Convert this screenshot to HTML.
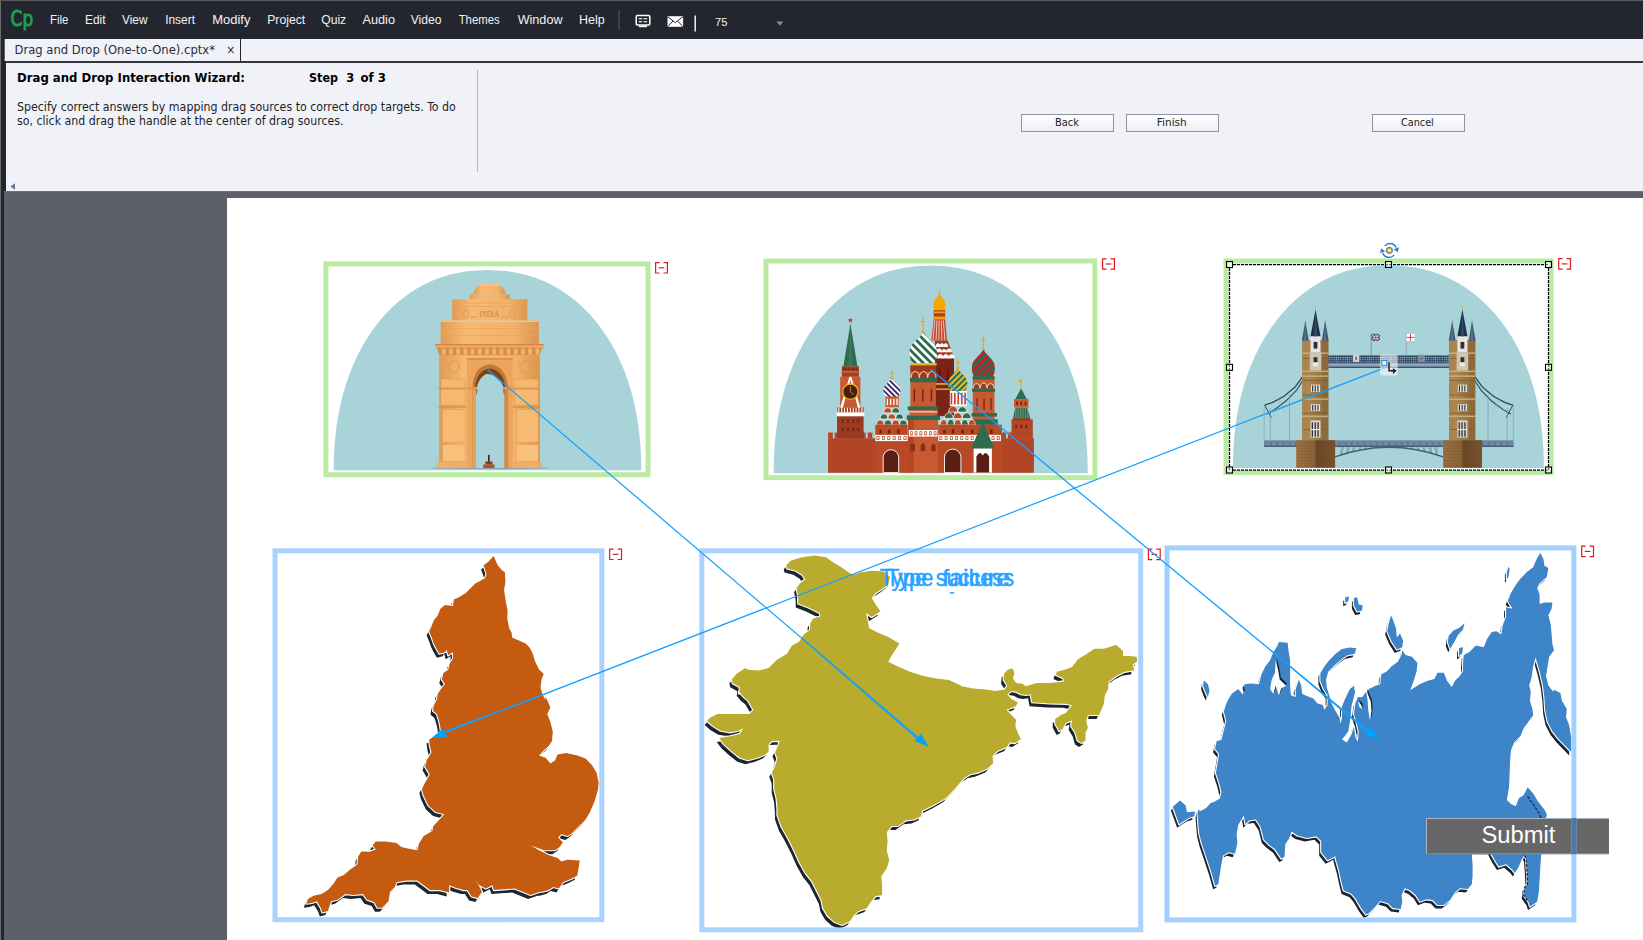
<!DOCTYPE html>
<html><head><meta charset="utf-8"><title>Drag and Drop (One-to-One).cptx</title>
<style>
html,body{margin:0;padding:0;}
body{width:1643px;height:940px;overflow:hidden;position:relative;background:#5d6069;font-family:"DejaVu Sans","Liberation Sans",sans-serif;}
.abs{position:absolute;}
#menubar{left:0;top:0;width:1643px;height:39px;background:#23262f;}
#leftedge{left:0;top:0;width:4px;height:940px;background:#23262f;border-left:1px solid #6b6b6b;box-sizing:border-box;}
#topedge{left:0;top:0;width:1643px;height:1px;background:#5a5a5a;}
#tabstrip{left:5px;top:39px;width:1638px;height:22px;background:#f0f2f8;}
#tab{left:5px;top:39px;width:235px;height:22px;border-right:1px solid #23262f;background:#f0f2f8;}
#tabline{left:4px;top:61px;width:1639px;height:2px;background:#33363e;}
#panel{left:6px;top:63px;width:1637px;height:128px;background:#f0f2f8;}
#paneledge{left:4px;top:61px;width:2px;height:130px;background:#23262f;}
#stagetop{left:4px;top:191px;width:1639px;height:1px;background:#6c6f77;}
#canvas{left:227px;top:198px;width:1416px;height:742px;background:#fff;}
#vsep{left:477px;top:70px;width:1px;height:102px;background:#b4b6c4;}
.btn{height:16px;width:91px;border:1px solid #8e90a3;background:linear-gradient(#ffffff,#eceef6);}
</style></head>
<body>
<div class="abs" id="menubar"></div>
<div class="abs" id="tabstrip"></div>
<div class="abs" id="tab"></div>
<div class="abs" id="tabline"></div>
<div class="abs" id="panel"></div>
<div class="abs" id="stagetop"></div>
<div class="abs" id="leftedge"></div>
<div class="abs" id="paneledge"></div>
<div class="abs" id="topedge"></div>
<div class="abs" id="vsep"></div>
<div class="abs btn" style="left:1021px;top:114px"></div>
<div class="abs btn" style="left:1126px;top:114px"></div>
<div class="abs btn" style="left:1372px;top:114px"></div>
<div class="abs" id="canvas"></div>
<!--STAGE-->
<svg class="abs" style="left:0;top:0" width="1643" height="940" viewBox="0 0 1643 940">
<path d="M333.8 470.3 L333.8 463.5 L334.0 457.4 L334.2 451.5 L334.6 445.8 L335.0 440.2 L335.6 434.7 L336.2 429.2 L336.9 423.9 L337.8 418.6 L338.7 413.4 L339.7 408.2 L340.8 403.2 L342.0 398.2 L343.3 393.2 L344.7 388.4 L346.2 383.6 L347.8 378.9 L349.4 374.3 L351.2 369.7 L353.0 365.2 L355.0 360.8 L357.0 356.5 L359.1 352.3 L361.3 348.2 L363.6 344.1 L365.9 340.2 L368.4 336.3 L370.9 332.5 L373.5 328.9 L376.2 325.3 L378.9 321.8 L381.7 318.4 L384.6 315.1 L387.6 312.0 L390.6 308.9 L393.7 305.9 L396.9 303.1 L400.2 300.3 L403.5 297.7 L406.8 295.2 L410.3 292.8 L413.8 290.5 L417.3 288.3 L420.9 286.3 L424.6 284.3 L428.3 282.5 L432.1 280.8 L435.9 279.2 L439.8 277.8 L443.8 276.5 L447.8 275.3 L451.8 274.2 L456.0 273.2 L460.1 272.4 L464.4 271.7 L468.7 271.1 L473.1 270.7 L477.6 270.4 L482.3 270.2 L487.5 270.1 L492.7 270.2 L497.4 270.4 L501.9 270.7 L506.3 271.1 L510.6 271.7 L514.9 272.4 L519.0 273.2 L523.2 274.2 L527.2 275.3 L531.2 276.5 L535.2 277.8 L539.1 279.2 L542.9 280.8 L546.7 282.5 L550.4 284.3 L554.1 286.3 L557.7 288.3 L561.2 290.5 L564.7 292.8 L568.2 295.2 L571.5 297.7 L574.8 300.3 L578.1 303.1 L581.3 305.9 L584.4 308.9 L587.4 312.0 L590.4 315.1 L593.3 318.4 L596.1 321.8 L598.8 325.3 L601.5 328.9 L604.1 332.5 L606.6 336.3 L609.1 340.2 L611.4 344.1 L613.7 348.2 L615.9 352.3 L618.0 356.5 L620.0 360.8 L622.0 365.2 L623.8 369.7 L625.6 374.3 L627.2 378.9 L628.8 383.6 L630.3 388.4 L631.7 393.2 L633.0 398.2 L634.2 403.2 L635.3 408.2 L636.3 413.4 L637.2 418.6 L638.1 423.9 L638.8 429.2 L639.4 434.7 L640.0 440.2 L640.4 445.8 L640.8 451.5 L641.0 457.4 L641.2 463.5 L641.2 470.3 Z" fill="#a7d3d9"/>
<path d="M773.7 473.2 L773.8 466.2 L773.9 459.9 L774.2 453.8 L774.5 447.8 L774.9 442.0 L775.5 436.3 L776.1 430.6 L776.9 425.1 L777.7 419.6 L778.7 414.2 L779.7 408.9 L780.9 403.6 L782.1 398.4 L783.4 393.3 L784.8 388.3 L786.4 383.3 L788.0 378.5 L789.7 373.7 L791.5 368.9 L793.4 364.3 L795.3 359.8 L797.4 355.3 L799.6 350.9 L801.8 346.6 L804.1 342.4 L806.5 338.3 L809.0 334.3 L811.6 330.4 L814.2 326.6 L817.0 322.9 L819.8 319.3 L822.7 315.8 L825.6 312.4 L828.7 309.1 L831.8 305.9 L834.9 302.8 L838.2 299.9 L841.5 297.0 L844.9 294.3 L848.3 291.7 L851.8 289.2 L855.4 286.8 L859.0 284.6 L862.7 282.4 L866.5 280.4 L870.3 278.6 L874.1 276.8 L878.0 275.2 L882.0 273.7 L886.0 272.3 L890.1 271.0 L894.3 269.9 L898.5 268.9 L902.7 268.1 L907.1 267.4 L911.5 266.8 L916.0 266.3 L920.6 266.0 L925.4 265.8 L930.7 265.7 L936.0 265.8 L940.8 266.0 L945.4 266.3 L949.9 266.8 L954.3 267.4 L958.7 268.1 L962.9 268.9 L967.1 269.9 L971.3 271.0 L975.4 272.3 L979.4 273.7 L983.4 275.2 L987.3 276.8 L991.1 278.6 L994.9 280.4 L998.7 282.4 L1002.4 284.6 L1006.0 286.8 L1009.6 289.2 L1013.1 291.7 L1016.5 294.3 L1019.9 297.0 L1023.2 299.9 L1026.5 302.8 L1029.6 305.9 L1032.7 309.1 L1035.8 312.4 L1038.7 315.8 L1041.6 319.3 L1044.4 322.9 L1047.2 326.6 L1049.8 330.4 L1052.4 334.3 L1054.9 338.3 L1057.3 342.4 L1059.6 346.6 L1061.8 350.9 L1064.0 355.3 L1066.1 359.8 L1068.0 364.3 L1069.9 368.9 L1071.7 373.7 L1073.4 378.5 L1075.0 383.3 L1076.6 388.3 L1078.0 393.3 L1079.3 398.4 L1080.5 403.6 L1081.7 408.9 L1082.7 414.2 L1083.7 419.6 L1084.5 425.1 L1085.3 430.6 L1085.9 436.3 L1086.5 442.0 L1086.9 447.8 L1087.2 453.8 L1087.5 459.9 L1087.6 466.2 L1087.7 473.2 Z" fill="#a7d3d9"/>
<path d="M1233.0 468.0 L1233.0 461.2 L1233.2 455.0 L1233.4 449.0 L1233.8 443.2 L1234.2 437.5 L1234.8 431.9 L1235.4 426.4 L1236.2 421.0 L1237.0 415.7 L1237.9 410.4 L1239.0 405.2 L1240.1 400.0 L1241.3 395.0 L1242.6 390.0 L1244.0 385.1 L1245.5 380.3 L1247.1 375.5 L1248.8 370.8 L1250.6 366.2 L1252.5 361.7 L1254.4 357.2 L1256.5 352.9 L1258.6 348.6 L1260.8 344.4 L1263.1 340.3 L1265.5 336.3 L1268.0 332.4 L1270.5 328.6 L1273.1 324.9 L1275.8 321.2 L1278.6 317.7 L1281.5 314.3 L1284.4 311.0 L1287.4 307.8 L1290.5 304.6 L1293.6 301.7 L1296.8 298.8 L1300.1 296.0 L1303.4 293.3 L1306.9 290.8 L1310.3 288.3 L1313.9 286.0 L1317.4 283.8 L1321.1 281.7 L1324.8 279.8 L1328.6 277.9 L1332.4 276.2 L1336.3 274.6 L1340.2 273.2 L1344.2 271.8 L1348.2 270.6 L1352.3 269.5 L1356.5 268.6 L1360.7 267.7 L1365.0 267.0 L1369.4 266.4 L1373.8 266.0 L1378.4 265.7 L1383.2 265.5 L1388.4 265.4 L1393.6 265.5 L1398.4 265.7 L1403.0 266.0 L1407.4 266.4 L1411.8 267.0 L1416.1 267.7 L1420.3 268.6 L1424.5 269.5 L1428.6 270.6 L1432.6 271.8 L1436.6 273.2 L1440.5 274.6 L1444.4 276.2 L1448.2 277.9 L1452.0 279.8 L1455.7 281.7 L1459.4 283.8 L1462.9 286.0 L1466.5 288.3 L1469.9 290.8 L1473.4 293.3 L1476.7 296.0 L1480.0 298.8 L1483.2 301.7 L1486.3 304.6 L1489.4 307.8 L1492.4 311.0 L1495.3 314.3 L1498.2 317.7 L1501.0 321.2 L1503.7 324.9 L1506.3 328.6 L1508.8 332.4 L1511.3 336.3 L1513.7 340.3 L1516.0 344.4 L1518.2 348.6 L1520.3 352.9 L1522.4 357.2 L1524.3 361.7 L1526.2 366.2 L1528.0 370.8 L1529.7 375.5 L1531.3 380.3 L1532.8 385.1 L1534.2 390.0 L1535.5 395.0 L1536.7 400.0 L1537.8 405.2 L1538.9 410.4 L1539.8 415.7 L1540.6 421.0 L1541.4 426.4 L1542.0 431.9 L1542.6 437.5 L1543.0 443.2 L1543.4 449.0 L1543.6 455.0 L1543.8 461.2 L1543.8 468.0 Z" fill="#a7d3d9"/>
<g>
<defs><linearGradient id="gg" x1="0" x2="1" y1="0" y2="0"><stop offset="0" stop-color="#e39a52"/><stop offset="0.25" stop-color="#f6b973"/><stop offset="0.75" stop-color="#f3b26b"/><stop offset="1" stop-color="#dd944c"/></linearGradient><linearGradient id="gg2" x1="0" x2="0" y1="0" y2="1"><stop offset="0" stop-color="#f8c07c"/><stop offset="1" stop-color="#e9a259"/></linearGradient></defs>
<ellipse cx="489.8" cy="468.0" rx="58.9" ry="1.2" fill="#6f9096" opacity="0.6"/>
<path d="M473.4 294.4 Q474.5 283.1 489.8 283.1 Q504.6 283.1 505.5 294.4 Z" fill="url(#gg)"/>
<rect x="478.9" y="283.5" width="21.4" height="2.2" fill="#f8c483" />
<rect x="469.7" y="294.4" width="40.1" height="5.0" fill="url(#gg)" />
<rect x="452.3" y="299.4" width="75.0" height="21.2" fill="url(#gg)" />
<rect x="452.3" y="302.7" width="75.0" height="0.7" fill="#e6a25c" />
<rect x="452.3" y="306.0" width="75.0" height="0.7" fill="#e6a25c" />
<rect x="440.7" y="320.6" width="98.1" height="23.5" fill="url(#gg)" />
<rect x="440.7" y="320.6" width="98.1" height="1.3" fill="#f9c88a" />
<rect x="440.7" y="328.4" width="98.1" height="0.7" fill="#e6a25c" />
<rect x="440.7" y="335.4" width="98.1" height="0.7" fill="#e6a25c" />
<rect x="435.3" y="344.1" width="108.6" height="3.5" fill="#eea862" />
<rect x="435.3" y="344.1" width="108.6" height="1.1" fill="#c9843f" />
<path d="M436.6 347.6 H542.5 L539.5 355.5 H439.6 Z" fill="#d48d47"/>
<rect x="441.8" y="348.5" width="3.9" height="6.1" fill="#f2b26b" />
<rect x="449.0" y="348.5" width="3.9" height="6.1" fill="#f2b26b" />
<rect x="456.2" y="348.5" width="3.9" height="6.1" fill="#f2b26b" />
<rect x="463.4" y="348.5" width="3.9" height="6.1" fill="#f2b26b" />
<rect x="470.6" y="348.5" width="3.9" height="6.1" fill="#f2b26b" />
<rect x="477.8" y="348.5" width="3.9" height="6.1" fill="#f2b26b" />
<rect x="485.0" y="348.5" width="3.9" height="6.1" fill="#f2b26b" />
<rect x="492.2" y="348.5" width="3.9" height="6.1" fill="#f2b26b" />
<rect x="499.4" y="348.5" width="3.9" height="6.1" fill="#f2b26b" />
<rect x="506.6" y="348.5" width="3.9" height="6.1" fill="#f2b26b" />
<rect x="513.8" y="348.5" width="3.9" height="6.1" fill="#f2b26b" />
<rect x="521.0" y="348.5" width="3.9" height="6.1" fill="#f2b26b" />
<rect x="528.2" y="348.5" width="3.9" height="6.1" fill="#f2b26b" />
<rect x="535.4" y="348.5" width="3.9" height="6.1" fill="#f2b26b" />
<rect x="439.2" y="355.5" width="100.7" height="112.5" fill="url(#gg)" />
<rect x="440.9" y="379.0" width="24.2" height="26.2" fill="#f5b870" stroke="#d99550" stroke-width="0.6"/>
<rect x="442.7" y="409.6" width="22.5" height="32.7" fill="#f6ba73" stroke="#dd9a55" stroke-width="0.5"/>
<rect x="442.7" y="444.4" width="22.5" height="17.4" fill="#f8c07d" stroke="#dd9a55" stroke-width="0.5"/>
<rect x="438.5" y="387.7" width="28.3" height="1.7" fill="#d8924c" />
<rect x="438.5" y="406.3" width="28.3" height="1.5" fill="#d8924c" />
<circle cx="453.7" cy="367.0" r="5.7" fill="none" stroke="#d79450" stroke-width="0.8"/>
<rect x="514.4" y="379.0" width="23.8" height="26.2" fill="#f5b870" stroke="#d99550" stroke-width="0.6"/>
<rect x="516.2" y="409.6" width="22.0" height="32.7" fill="#f6ba73" stroke="#dd9a55" stroke-width="0.5"/>
<rect x="516.2" y="444.4" width="22.0" height="17.4" fill="#f8c07d" stroke="#dd9a55" stroke-width="0.5"/>
<rect x="512.0" y="387.7" width="27.9" height="1.7" fill="#d8924c" />
<rect x="512.0" y="406.3" width="27.9" height="1.5" fill="#d8924c" />
<circle cx="525.6" cy="367.0" r="5.7" fill="none" stroke="#d79450" stroke-width="0.8"/>
<rect x="437.4" y="461.9" width="31.6" height="6.1" fill="#f0ad66" />
<rect x="510.5" y="461.9" width="31.2" height="6.1" fill="#f0ad66" />
<rect x="466.9" y="358.3" width="45.8" height="109.7" fill="#eda45c" />
<rect x="466.9" y="358.3" width="45.8" height="1.5" fill="#d48d47" />
<path d="M472.3 468.0 V388.8 Q473.4 365.9 489.8 364.2 Q506.8 365.9 508.1 388.8 V468.0 Z" fill="#c07a38"/>
<path d="M474.9 388.8 Q476.3 370.7 489.8 368.6 Q504.0 370.7 505.5 388.8 Z" fill="#7c4318"/>
<path d="M476.0 468.0 V392.1 Q477.1 379.0 485.4 374.2 Q495.2 372.5 502.9 385.6 L504.6 395.4 V468.0 Z" fill="#a7d3d9"/>
<rect x="467.5" y="386.9" width="9.6" height="2.6" fill="#e09a55" />
<rect x="502.9" y="386.9" width="9.6" height="2.6" fill="#e09a55" />
<path d="M474.5 389.5 h3.1 l-0.9 4.8 h-2.2 Z" fill="#a8672c"/>
<path d="M502.9 389.5 h3.1 v4.8 h-2.2 Z" fill="#a8672c"/>
<rect x="472.3" y="389.5" width="3.7" height="78.5" fill="#e8a058" />
<rect x="504.6" y="389.5" width="3.5" height="78.5" fill="#d18a45" />
<rect x="488.0" y="454.9" width="1.7" height="7.0" fill="#3a2a22" />
<rect x="485.4" y="461.5" width="7.0" height="3.1" fill="#8b3a1c" />
<rect x="483.2" y="464.5" width="11.3" height="3.5" fill="#b5502a" />
<text x="489.3" y="316.9" text-anchor="middle" font-family="'Liberation Serif',serif" font-size="7.2" fill="#c07f3d" textLength="20" lengthAdjust="spacingAndGlyphs">INDIA</text>
<path d="M470.6 316.9 H477.1 M501.1 316.9 H508.3" stroke="#c98a48" stroke-width="0.7" fill="none"/>
<ellipse cx="466.2" cy="313.6" rx="2.6" ry="4" fill="none" stroke="#d29351" stroke-width="0.7"/><ellipse cx="512.0" cy="313.6" rx="2.6" ry="4" fill="none" stroke="#d29351" stroke-width="0.7"/>
</g>
<g>
<defs><pattern id="pgw" width="5.6" height="5.6" patternUnits="userSpaceOnUse" patternTransform="rotate(-45)"><rect width="5.6" height="5.6" fill="#2f6b4f"/><rect width="2.8" height="5.6" fill="#fff"/></pattern><pattern id="ppw" width="3.8" height="3.8" patternUnits="userSpaceOnUse" patternTransform="rotate(-45)"><rect width="3.8" height="3.8" fill="#3a2a6e"/><rect width="1.9" height="3.8" fill="#fff"/></pattern><pattern id="pyg" width="4.2" height="4.2" patternUnits="userSpaceOnUse" patternTransform="rotate(45)"><rect width="4.2" height="4.2" fill="#e3c22a"/><rect width="2.1" height="4.2" fill="#2f6b4f"/></pattern><pattern id="prg" width="5.2" height="5.2" patternUnits="userSpaceOnUse" patternTransform="rotate(45)"><rect width="5.2" height="5.2" fill="#c2212b"/><rect width="2.6" height="5.2" fill="#2f6b4f"/></pattern><pattern id="prw" width="1.6" height="1.6" patternUnits="userSpaceOnUse" patternTransform="rotate(0)"><rect width="1.6" height="1.6" fill="#c2452a"/><rect width="0.8" height="1.6" fill="#fff"/></pattern><pattern id="pgt" width="2.4" height="2.4" patternUnits="userSpaceOnUse" patternTransform="rotate(0)"><rect width="2.4" height="2.4" fill="#2f6b4f"/><rect width="1.2" height="2.4" fill="#5d8f74"/></pattern></defs>
<rect x="828.1" y="438.5" width="205.7" height="34.0" fill="#bb4b27" />
<rect x="828.1" y="438.5" width="47.2" height="34.0" fill="#b24526" />
<rect x="1001.9" y="438.5" width="31.9" height="34.0" fill="#b24526" />
<polygon points="828.1,438.5 828.1,431.5 829.4,433.6 830.6,431.5 831.9,433.6 832.8,431.5 832.8,438.5" fill="#b24526" />
<polygon points="834.7,438.5 834.7,431.5 836.0,433.6 837.2,431.5 838.5,433.6 839.4,431.5 839.4,438.5" fill="#b24526" />
<polygon points="841.3,438.5 841.3,431.5 842.6,433.6 843.8,431.5 845.1,433.6 846.0,431.5 846.0,438.5" fill="#b24526" />
<polygon points="847.9,438.5 847.9,431.5 849.1,433.6 850.4,431.5 851.7,433.6 852.6,431.5 852.6,438.5" fill="#b24526" />
<polygon points="854.5,438.5 854.5,431.5 855.7,433.6 857.0,431.5 858.3,433.6 859.1,431.5 859.1,438.5" fill="#b24526" />
<polygon points="861.1,438.5 861.1,431.5 862.3,433.6 863.6,431.5 864.9,433.6 865.7,431.5 865.7,438.5" fill="#b24526" />
<polygon points="867.7,438.5 867.7,431.5 868.9,433.6 870.2,431.5 871.5,433.6 872.3,431.5 872.3,438.5" fill="#b24526" />
<polygon points="1001.3,438.5 1001.3,431.5 1002.6,433.6 1003.8,431.5 1005.1,433.6 1006.0,431.5 1006.0,438.5" fill="#b24526" />
<polygon points="1007.9,438.5 1007.9,431.5 1009.1,433.6 1010.4,431.5 1011.7,433.6 1012.6,431.5 1012.6,438.5" fill="#b24526" />
<polygon points="1014.5,438.5 1014.5,431.5 1015.7,433.6 1017.0,431.5 1018.3,433.6 1019.1,431.5 1019.1,438.5" fill="#b24526" />
<polygon points="1021.1,438.5 1021.1,431.5 1022.3,433.6 1023.6,431.5 1024.9,433.6 1025.7,431.5 1025.7,438.5" fill="#b24526" />
<polygon points="1027.7,438.5 1027.7,431.5 1028.9,433.6 1030.2,431.5 1031.5,433.6 1032.3,431.5 1032.3,438.5" fill="#b24526" />
<rect x="877.9" y="457.3" width="1.9" height="0.9" fill="#a53e20" />
<rect x="904.7" y="459.0" width="1.9" height="0.9" fill="#a53e20" />
<rect x="956.7" y="443.6" width="1.9" height="0.9" fill="#a53e20" />
<rect x="832.3" y="465.8" width="1.9" height="0.9" fill="#a53e20" />
<rect x="882.3" y="448.4" width="1.9" height="0.9" fill="#a53e20" />
<rect x="1031.9" y="455.2" width="1.9" height="0.9" fill="#a53e20" />
<rect x="999.5" y="455.4" width="1.9" height="0.9" fill="#a53e20" />
<rect x="959.4" y="446.0" width="1.9" height="0.9" fill="#a53e20" />
<rect x="958.6" y="466.6" width="1.9" height="0.9" fill="#a53e20" />
<rect x="935.9" y="463.0" width="1.9" height="0.9" fill="#a53e20" />
<rect x="966.0" y="443.5" width="1.9" height="0.9" fill="#a53e20" />
<rect x="983.6" y="458.7" width="1.9" height="0.9" fill="#a53e20" />
<rect x="890.8" y="442.6" width="1.9" height="0.9" fill="#a53e20" />
<rect x="1005.4" y="455.3" width="1.9" height="0.9" fill="#a53e20" />
<rect x="975.6" y="466.9" width="1.9" height="0.9" fill="#a53e20" />
<rect x="974.7" y="468.2" width="1.9" height="0.9" fill="#a53e20" />
<rect x="909.8" y="464.7" width="1.9" height="0.9" fill="#a53e20" />
<rect x="919.9" y="468.6" width="1.9" height="0.9" fill="#a53e20" />
<rect x="1008.2" y="444.5" width="1.9" height="0.9" fill="#a53e20" />
<rect x="857.2" y="447.9" width="1.9" height="0.9" fill="#a53e20" />
<rect x="1025.8" y="454.2" width="1.9" height="0.9" fill="#a53e20" />
<rect x="956.9" y="450.3" width="1.9" height="0.9" fill="#a53e20" />
<rect x="932.6" y="452.8" width="1.9" height="0.9" fill="#a53e20" />
<rect x="900.9" y="458.5" width="1.9" height="0.9" fill="#a53e20" />
<rect x="948.3" y="467.7" width="1.9" height="0.9" fill="#a53e20" />
<rect x="968.1" y="468.4" width="1.9" height="0.9" fill="#a53e20" />
<rect x="1003.6" y="470.2" width="1.9" height="0.9" fill="#a53e20" />
<rect x="966.0" y="446.4" width="1.9" height="0.9" fill="#a53e20" />
<rect x="1004.4" y="469.4" width="1.9" height="0.9" fill="#a53e20" />
<rect x="1013.4" y="458.0" width="1.9" height="0.9" fill="#a53e20" />
<rect x="974.6" y="447.8" width="1.9" height="0.9" fill="#a53e20" />
<rect x="998.6" y="458.2" width="1.9" height="0.9" fill="#a53e20" />
<rect x="887.5" y="443.5" width="1.9" height="0.9" fill="#a53e20" />
<rect x="1003.1" y="470.1" width="1.9" height="0.9" fill="#a53e20" />
<rect x="847.6" y="464.7" width="1.9" height="0.9" fill="#a53e20" />
<rect x="913.0" y="446.0" width="1.9" height="0.9" fill="#a53e20" />
<rect x="889.3" y="463.8" width="1.9" height="0.9" fill="#a53e20" />
<rect x="1006.9" y="443.0" width="1.9" height="0.9" fill="#a53e20" />
<rect x="954.4" y="443.0" width="1.9" height="0.9" fill="#a53e20" />
<rect x="975.6" y="451.2" width="1.9" height="0.9" fill="#a53e20" />
<rect x="1008.6" y="469.9" width="1.9" height="0.9" fill="#a53e20" />
<rect x="932.3" y="470.4" width="1.9" height="0.9" fill="#a53e20" />
<rect x="892.5" y="443.9" width="1.9" height="0.9" fill="#a53e20" />
<rect x="951.4" y="442.6" width="1.9" height="0.9" fill="#a53e20" />
<rect x="869.7" y="453.4" width="1.9" height="0.9" fill="#a53e20" />
<rect x="953.6" y="446.2" width="1.9" height="0.9" fill="#a53e20" />
<rect x="838.2" y="466.6" width="1.9" height="0.9" fill="#a53e20" />
<rect x="893.3" y="469.2" width="1.9" height="0.9" fill="#a53e20" />
<rect x="1011.8" y="452.6" width="1.9" height="0.9" fill="#a53e20" />
<rect x="923.1" y="456.6" width="1.9" height="0.9" fill="#a53e20" />
<rect x="960.4" y="458.8" width="1.9" height="0.9" fill="#a53e20" />
<rect x="943.2" y="459.5" width="1.9" height="0.9" fill="#a53e20" />
<rect x="1020.7" y="456.3" width="1.9" height="0.9" fill="#a53e20" />
<rect x="917.2" y="462.4" width="1.9" height="0.9" fill="#a53e20" />
<rect x="877.9" y="450.4" width="1.9" height="0.9" fill="#a53e20" />
<rect x="1028.3" y="456.7" width="1.9" height="0.9" fill="#a53e20" />
<rect x="941.0" y="442.0" width="1.9" height="0.9" fill="#a53e20" />
<rect x="913.9" y="458.4" width="1.9" height="0.9" fill="#a53e20" />
<rect x="833.6" y="459.4" width="1.9" height="0.9" fill="#a53e20" />
<rect x="958.0" y="443.4" width="1.9" height="0.9" fill="#a53e20" />
<rect x="837.0" y="416.2" width="26.6" height="22.3" fill="#9b3a1f" />
<rect x="842.1" y="419.4" width="1.7" height="3.2" fill="#6b2413" />
<rect x="842.1" y="427.9" width="1.7" height="3.2" fill="#6b2413" />
<rect x="847.2" y="419.4" width="1.7" height="3.2" fill="#6b2413" />
<rect x="847.2" y="427.9" width="1.7" height="3.2" fill="#6b2413" />
<rect x="852.3" y="419.4" width="1.7" height="3.2" fill="#6b2413" />
<rect x="852.3" y="427.9" width="1.7" height="3.2" fill="#6b2413" />
<rect x="857.4" y="419.4" width="1.7" height="3.2" fill="#6b2413" />
<rect x="857.4" y="427.9" width="1.7" height="3.2" fill="#6b2413" />
<rect x="836.6" y="411.9" width="27.7" height="4.3" fill="#fff" />
<rect x="837.4" y="407.2" width="26.2" height="5.1" fill="#a53e20" />
<rect x="838.3" y="407.2" width="1.1" height="5.1" fill="#fff" />
<rect x="841.2" y="407.2" width="1.1" height="5.1" fill="#fff" />
<rect x="844.0" y="407.2" width="1.1" height="5.1" fill="#fff" />
<rect x="846.9" y="407.2" width="1.1" height="5.1" fill="#fff" />
<rect x="849.8" y="407.2" width="1.1" height="5.1" fill="#fff" />
<rect x="852.7" y="407.2" width="1.1" height="5.1" fill="#fff" />
<rect x="855.5" y="407.2" width="1.1" height="5.1" fill="#fff" />
<rect x="858.4" y="407.2" width="1.1" height="5.1" fill="#fff" />
<rect x="861.3" y="407.2" width="1.1" height="5.1" fill="#fff" />
<rect x="840.2" y="376.8" width="20.2" height="30.9" fill="#c75a30" />
<polygon points="840.2,407.7 850.4,373.6 860.4,407.7 857.9,407.7 850.4,380.0 842.8,407.7" fill="#fff" />
<rect x="841.9" y="366.2" width="17.0" height="10.6" fill="#a8401f" />
<rect x="843.0" y="367.7" width="1.3" height="2.8" fill="#6b2413" />
<rect x="845.6" y="367.7" width="1.3" height="2.8" fill="#6b2413" />
<rect x="848.3" y="367.7" width="1.3" height="2.8" fill="#6b2413" />
<rect x="851.0" y="367.7" width="1.3" height="2.8" fill="#6b2413" />
<rect x="853.6" y="367.7" width="1.3" height="2.8" fill="#6b2413" />
<rect x="856.3" y="367.7" width="1.3" height="2.8" fill="#6b2413" />
<rect x="841.3" y="371.1" width="18.3" height="1.3" fill="#d9643a" />
<polygon points="850.4,323.6 857.4,366.2 843.4,366.2" fill="#2f6b4f" />
<polygon points="850.4,323.6 851.9,366.2 848.9,366.2" fill="#3c7c5e" />
<polygon points="850.4,317.7 851.1,319.5 853.1,319.6 851.5,320.8 852.1,322.7 850.4,321.6 848.8,322.7 849.3,320.8 847.8,319.6 849.7,319.5" fill="#cf1f2b" />
<circle cx="850.4" cy="391.7" r="7.7" fill="#4a1d10" stroke="#f2b01e" stroke-width="1.3"/>
<path d="M850.4 391.7 V386.4 M850.4 391.7 L853.6 394.9" stroke="#f2b01e" stroke-width="0.7"/>
<rect x="1011.5" y="419.4" width="21.3" height="19.1" fill="#b24526" />
<rect x="1014.0" y="399.1" width="14.5" height="8.5" fill="#c75a30" />
<polygon points="1021.1,388.5 1026.8,399.1 1015.3,399.1" fill="#2f6b4f" />
<polygon points="1015.3,407.7 1027.4,407.7 1030.6,419.4 1012.6,419.4" fill="url(#pgt)" />
<rect x="1013.2" y="418.3" width="17.0" height="2.1" fill="#9b3a1f" />
<path d="M1021.1 388.5 V378.9" stroke="#e9a31c" stroke-width="0.8"/>
<polygon points="1021.1,378.9 1017.9,380.4 1021.1,383.2" fill="#e9a31c" />
<rect x="1016.2" y="401.7" width="1.7" height="3.4" fill="#6b2413" />
<rect x="1015.3" y="424.7" width="1.7" height="3.4" fill="#6b2413" />
<rect x="1020.4" y="401.7" width="1.7" height="3.4" fill="#6b2413" />
<rect x="1020.4" y="424.7" width="1.7" height="3.4" fill="#6b2413" />
<rect x="1024.7" y="401.7" width="1.7" height="3.4" fill="#6b2413" />
<rect x="1025.5" y="424.7" width="1.7" height="3.4" fill="#6b2413" />
<rect x="934.9" y="358.7" width="19.1" height="57.4" fill="#7a2418" />
<rect x="936.0" y="383.2" width="17.7" height="1.5" fill="#e3c22a" />
<rect x="936.0" y="388.5" width="17.7" height="1.3" fill="#e3c22a" />
<path d="M939.6 380.0 V369.4 M947.7 380.0 V369.4" stroke="#4a130c" stroke-width="1.2"/>
<polygon points="934.9,340.6 947.7,340.6 954.5,358.7 934.9,358.7" fill="#a33b22" />
<path d="M936.0 347.0 A1.95 3.40 0 0 1 939.9 347.0" fill="#fff" stroke="#fff" stroke-width="0.8"/><path d="M939.9 347.0 A1.95 3.40 0 0 1 943.8 347.0" fill="#fff" stroke="#fff" stroke-width="0.8"/><path d="M943.8 347.0 A1.95 3.40 0 0 1 947.7 347.0" fill="#fff" stroke="#fff" stroke-width="0.8"/>
<path d="M936.6 352.3 A2.48 3.40 0 0 1 941.6 352.3" fill="#fff" stroke="#fff" stroke-width="0.8"/><path d="M941.6 352.3 A2.48 3.40 0 0 1 946.5 352.3" fill="#fff" stroke="#fff" stroke-width="0.8"/><path d="M946.5 352.3 A2.48 3.40 0 0 1 951.5 352.3" fill="#fff" stroke="#fff" stroke-width="0.8"/>
<path d="M937.4 358.3 A2.84 3.83 0 0 1 943.1 358.3" fill="#fff" stroke="#fff" stroke-width="0.8"/><path d="M943.1 358.3 A2.84 3.83 0 0 1 948.8 358.3" fill="#fff" stroke="#fff" stroke-width="0.8"/><path d="M948.8 358.3 A2.84 3.83 0 0 1 954.5 358.3" fill="#fff" stroke="#fff" stroke-width="0.8"/>
<polygon points="933.8,319.4 945.1,319.4 947.0,340.6 931.3,340.6" fill="#c2452a" />
<path d="M934.9 320.4 L933.0 340.2" stroke="#fff" stroke-width="0.7"/>
<path d="M937.0 320.4 L936.0 340.2" stroke="#fff" stroke-width="0.7"/>
<path d="M939.1 320.4 L938.9 340.2" stroke="#fff" stroke-width="0.7"/>
<path d="M941.3 320.4 L941.9 340.2" stroke="#fff" stroke-width="0.7"/>
<path d="M943.4 320.4 L944.9 340.2" stroke="#fff" stroke-width="0.7"/>
<rect x="933.8" y="309.8" width="11.3" height="9.6" fill="#b53c22" />
<rect x="933.4" y="311.5" width="12.1" height="1.7" fill="#e9a31c" />
<rect x="933.4" y="316.6" width="12.1" height="2.6" fill="#e9a31c" />
<path d="M939.4 293.2 C940.3 297.4 945.6 299.1 945.3 304.8 C945.3 308.2 944.1 310.2 943.7 310.2 H935.1 C934.6 310.2 933.4 308.2 933.4 304.8 C933.1 299.1 938.5 297.4 939.4 293.2Z" fill="#f5a800"/>
<path d="M939.4 290.2 V296.6 M938.3 292.3 H940.4" stroke="#e9a31c" stroke-width="0.8"/>
<rect x="972.8" y="376.8" width="21.7" height="47.9" fill="#c75a30" />
<path d="M983.4 348.5 C985.1 355.7 995.5 358.6 994.9 368.2 C994.9 374.0 992.6 377.4 991.7 377.4 H975.1 C974.2 377.4 971.9 374.0 971.9 368.2 C971.3 358.6 981.7 355.7 983.4 348.5Z" fill="url(#prg)"/>
<path d="M983.4 336.4 V350.2 M981.1 340.5 H985.7" stroke="#e9a31c" stroke-width="1" fill="none"/><circle cx="983.4" cy="348.9" r="1.4" fill="#e9a31c"/>
<rect x="972.8" y="376.2" width="21.7" height="3.4" fill="#2f6b4f" />
<path d="M973.2 388.5 A3.48 5.53 0 0 1 980.1 388.5" fill="#9b3a1f" stroke="#fff" stroke-width="0.8"/><path d="M980.1 388.5 A3.48 5.53 0 0 1 987.1 388.5" fill="#9b3a1f" stroke="#fff" stroke-width="0.8"/><path d="M987.1 388.5 A3.48 5.53 0 0 1 994.0 388.5" fill="#9b3a1f" stroke="#fff" stroke-width="0.8"/>
<rect x="972.1" y="388.5" width="22.8" height="3.4" fill="#2f6b4f" />
<rect x="976.4" y="398.1" width="1.3" height="11.7" fill="#7a2418" />
<rect x="983.4" y="398.1" width="1.3" height="11.7" fill="#7a2418" />
<rect x="990.4" y="398.1" width="1.3" height="11.7" fill="#7a2418" />
<rect x="971.5" y="413.0" width="25.5" height="3.6" fill="#2f6b4f" />
<rect x="974.3" y="419.4" width="23.4" height="5.3" fill="#2f6b4f" />
<rect x="949.8" y="390.6" width="17.0" height="15.3" fill="#fff" />
<rect x="950.6" y="392.8" width="1.7" height="11.7" fill="#c2452a" />
<rect x="954.0" y="392.8" width="1.7" height="11.7" fill="#c2452a" />
<rect x="957.4" y="392.8" width="1.7" height="11.7" fill="#c2452a" />
<rect x="960.9" y="392.8" width="1.7" height="11.7" fill="#c2452a" />
<rect x="964.3" y="392.8" width="1.7" height="11.7" fill="#c2452a" />
<path d="M957.9 367.7 C959.3 373.5 967.9 375.9 967.4 383.6 C967.4 388.3 965.5 391.1 964.8 391.1 H951.0 C950.2 391.1 948.3 388.3 948.3 383.6 C947.8 375.9 956.4 373.5 957.9 367.7Z" fill="url(#pyg)"/>
<path d="M957.9 359.1 V369.8 M955.5 362.3 H960.2" stroke="#e9a31c" stroke-width="1" fill="none"/><circle cx="957.9" cy="368.5" r="1.4" fill="#e9a31c"/>
<path d="M940.2 425.1 A3.51 5.87 0 0 1 947.2 425.1Z" fill="#b84a26" stroke="#fff" stroke-width="0.7"/><path d="M947.2 425.1 A3.51 5.87 0 0 1 954.3 425.1Z" fill="#2f6b4f" stroke="#fff" stroke-width="0.7"/><path d="M954.3 425.1 A3.51 5.87 0 0 1 961.3 425.1Z" fill="#b84a26" stroke="#fff" stroke-width="0.7"/><path d="M961.3 425.1 A3.51 5.87 0 0 1 968.3 425.1Z" fill="#2f6b4f" stroke="#fff" stroke-width="0.7"/><path d="M968.3 425.1 A3.51 5.87 0 0 1 975.3 425.1Z" fill="#b84a26" stroke="#fff" stroke-width="0.7"/><path d="M944.4 418.6 A4.45 5.87 0 0 1 953.3 418.6Z" fill="#2f6b4f" stroke="#fff" stroke-width="0.7"/><path d="M953.3 418.6 A4.45 5.87 0 0 1 962.2 418.6Z" fill="#b84a26" stroke="#fff" stroke-width="0.7"/><path d="M962.2 418.6 A4.45 5.87 0 0 1 971.1 418.6Z" fill="#2f6b4f" stroke="#fff" stroke-width="0.7"/><path d="M948.6 412.1 A4.56 5.87 0 0 1 957.8 412.1Z" fill="#b84a26" stroke="#fff" stroke-width="0.7"/><path d="M957.8 412.1 A4.56 5.87 0 0 1 966.9 412.1Z" fill="#2f6b4f" stroke="#fff" stroke-width="0.7"/>
<rect x="910.4" y="365.1" width="25.5" height="42.6" fill="#c75a30" />
<path d="M923.4 331.1 C925.5 339.1 937.9 342.4 937.2 353.1 C937.2 359.5 934.5 363.4 933.4 363.4 H913.4 C912.3 363.4 909.6 359.5 909.6 353.1 C908.9 342.4 921.3 339.1 923.4 331.1Z" fill="url(#pgw)"/>
<path d="M923.0 316.6 V333.2 M920.6 321.6 H925.3" stroke="#e9a31c" stroke-width="1" fill="none"/><circle cx="923.0" cy="331.9" r="1.4" fill="#e9a31c"/>
<rect x="910.6" y="363.0" width="26.0" height="2.6" fill="#e3b82a" />
<rect x="910.4" y="365.5" width="25.5" height="6.4" fill="#9b3a1f" />
<path d="M911.1 377.9 A4.15 6.38 0 0 1 919.4 377.9" fill="#9b3a1f" stroke="#fff" stroke-width="0.8"/><path d="M919.4 377.9 A4.15 6.38 0 0 1 927.7 377.9" fill="#9b3a1f" stroke="#fff" stroke-width="0.8"/><path d="M927.7 377.9 A4.15 6.38 0 0 1 936.0 377.9" fill="#9b3a1f" stroke="#fff" stroke-width="0.8"/>
<rect x="910.0" y="377.9" width="27.0" height="4.3" fill="#2f6b4f" />
<rect x="913.6" y="388.9" width="1.5" height="12.8" fill="#7a2418" />
<rect x="922.1" y="388.9" width="1.5" height="12.8" fill="#7a2418" />
<rect x="930.6" y="388.9" width="1.5" height="12.8" fill="#7a2418" />
<rect x="907.7" y="406.4" width="30.6" height="3.8" fill="#2f6b4f" />
<rect x="909.4" y="410.2" width="28.1" height="5.1" fill="#c75a30" />
<rect x="909.4" y="411.5" width="28.1" height="0.9" fill="#fff" />
<rect x="906.8" y="415.3" width="33.2" height="4.7" fill="#2f6b4f" />
<rect x="908.3" y="420.0" width="29.8" height="52.6" fill="#c75a30" />
<rect x="908.3" y="420.0" width="5.3" height="52.6" fill="#b24526" />
<rect x="885.5" y="396.0" width="13.2" height="11.3" fill="#c75a30" />
<rect x="886.8" y="398.7" width="1.3" height="6.4" fill="#fff" />
<rect x="890.0" y="398.7" width="1.3" height="6.4" fill="#fff" />
<rect x="893.2" y="398.7" width="1.3" height="6.4" fill="#fff" />
<rect x="896.4" y="398.7" width="1.3" height="6.4" fill="#fff" />
<path d="M891.9 377.4 C893.2 382.2 900.9 384.1 900.4 390.3 C900.4 394.1 898.7 396.4 898.0 396.4 H885.8 C885.1 396.4 883.4 394.1 883.4 390.3 C883.0 384.1 890.6 382.2 891.9 377.4Z" fill="url(#ppw)"/>
<path d="M891.9 370.2 V379.1 M889.6 372.9 H894.3" stroke="#e9a31c" stroke-width="1" fill="none"/><circle cx="891.9" cy="377.9" r="1.4" fill="#e9a31c"/>
<path d="M876.4 425.1 A3.86 5.49 0 0 1 884.1 425.1Z" fill="#b84a26" stroke="#fff" stroke-width="0.7"/><path d="M884.1 425.1 A3.86 5.49 0 0 1 891.8 425.1Z" fill="#2f6b4f" stroke="#fff" stroke-width="0.7"/><path d="M891.8 425.1 A3.86 5.49 0 0 1 899.5 425.1Z" fill="#b84a26" stroke="#fff" stroke-width="0.7"/><path d="M899.5 425.1 A3.86 5.49 0 0 1 907.2 425.1Z" fill="#2f6b4f" stroke="#fff" stroke-width="0.7"/><path d="M880.1 419.0 A3.91 5.49 0 0 1 887.9 419.0Z" fill="#2f6b4f" stroke="#fff" stroke-width="0.7"/><path d="M887.9 419.0 A3.91 5.49 0 0 1 895.7 419.0Z" fill="#b84a26" stroke="#fff" stroke-width="0.7"/><path d="M895.7 419.0 A3.91 5.49 0 0 1 903.5 419.0Z" fill="#2f6b4f" stroke="#fff" stroke-width="0.7"/><path d="M883.8 412.9 A4.01 5.49 0 0 1 891.8 412.9Z" fill="#b84a26" stroke="#fff" stroke-width="0.7"/><path d="M891.8 412.9 A4.01 5.49 0 0 1 899.8 412.9Z" fill="#2f6b4f" stroke="#fff" stroke-width="0.7"/>
<rect x="875.3" y="424.7" width="32.3" height="47.9" fill="#b84a26" />
<rect x="938.3" y="424.7" width="63.6" height="47.9" fill="#b84a26" />
<path d="M879.4 433.6 V430.6 A1.28 1.28 0 0 1 881.9 430.6 V433.6Z" fill="#6b2413"/>
<path d="M887.9 433.6 V430.6 A1.28 1.28 0 0 1 890.4 430.6 V433.6Z" fill="#6b2413"/>
<path d="M897.0 433.6 V430.6 A1.28 1.28 0 0 1 899.6 430.6 V433.6Z" fill="#6b2413"/>
<path d="M943.2 433.6 V430.6 A1.28 1.28 0 0 1 945.7 430.6 V433.6Z" fill="#6b2413"/>
<path d="M951.7 433.6 V430.6 A1.28 1.28 0 0 1 954.3 430.6 V433.6Z" fill="#6b2413"/>
<path d="M961.3 433.6 V430.6 A1.28 1.28 0 0 1 963.8 430.6 V433.6Z" fill="#6b2413"/>
<path d="M970.9 433.6 V430.6 A1.28 1.28 0 0 1 973.4 430.6 V433.6Z" fill="#6b2413"/>
<path d="M990.0 433.6 V430.6 A1.28 1.28 0 0 1 992.6 430.6 V433.6Z" fill="#6b2413"/>
<rect x="875.3" y="434.9" width="32.3" height="6.2" fill="#fff" /><rect x="876.5" y="436.2" width="3.0" height="3.6" fill="#b84a26" /><rect x="877.3" y="437.0" width="1.5" height="1.9" fill="#fff" /><rect x="881.9" y="436.2" width="3.0" height="3.6" fill="#b84a26" /><rect x="882.6" y="437.0" width="1.5" height="1.9" fill="#fff" /><rect x="887.3" y="436.2" width="3.0" height="3.6" fill="#b84a26" /><rect x="888.0" y="437.0" width="1.5" height="1.9" fill="#fff" /><rect x="892.7" y="436.2" width="3.0" height="3.6" fill="#b84a26" /><rect x="893.4" y="437.0" width="1.5" height="1.9" fill="#fff" /><rect x="898.1" y="436.2" width="3.0" height="3.6" fill="#b84a26" /><rect x="898.8" y="437.0" width="1.5" height="1.9" fill="#fff" /><rect x="903.5" y="436.2" width="3.0" height="3.6" fill="#b84a26" /><rect x="904.2" y="437.0" width="1.5" height="1.9" fill="#fff" />
<rect x="908.9" y="430.0" width="28.5" height="6.6" fill="#fff" /><rect x="910.0" y="431.3" width="2.7" height="4.0" fill="#b84a26" /><rect x="910.6" y="432.1" width="1.3" height="2.3" fill="#fff" /><rect x="914.7" y="431.3" width="2.7" height="4.0" fill="#b84a26" /><rect x="915.4" y="432.1" width="1.3" height="2.3" fill="#fff" /><rect x="919.5" y="431.3" width="2.7" height="4.0" fill="#b84a26" /><rect x="920.2" y="432.1" width="1.3" height="2.3" fill="#fff" /><rect x="924.2" y="431.3" width="2.7" height="4.0" fill="#b84a26" /><rect x="924.9" y="432.1" width="1.3" height="2.3" fill="#fff" /><rect x="929.0" y="431.3" width="2.7" height="4.0" fill="#b84a26" /><rect x="929.7" y="432.1" width="1.3" height="2.3" fill="#fff" /><rect x="933.7" y="431.3" width="2.7" height="4.0" fill="#b84a26" /><rect x="934.4" y="432.1" width="1.3" height="2.3" fill="#fff" />
<rect x="938.3" y="434.9" width="62.6" height="6.2" fill="#fff" /><rect x="939.4" y="436.2" width="2.9" height="3.6" fill="#b84a26" /><rect x="940.2" y="437.0" width="1.5" height="1.9" fill="#fff" /><rect x="944.7" y="436.2" width="2.9" height="3.6" fill="#b84a26" /><rect x="945.4" y="437.0" width="1.5" height="1.9" fill="#fff" /><rect x="949.9" y="436.2" width="2.9" height="3.6" fill="#b84a26" /><rect x="950.6" y="437.0" width="1.5" height="1.9" fill="#fff" /><rect x="955.1" y="436.2" width="2.9" height="3.6" fill="#b84a26" /><rect x="955.8" y="437.0" width="1.5" height="1.9" fill="#fff" /><rect x="960.3" y="436.2" width="2.9" height="3.6" fill="#b84a26" /><rect x="961.0" y="437.0" width="1.5" height="1.9" fill="#fff" /><rect x="965.5" y="436.2" width="2.9" height="3.6" fill="#b84a26" /><rect x="966.2" y="437.0" width="1.5" height="1.9" fill="#fff" /><rect x="970.7" y="436.2" width="2.9" height="3.6" fill="#b84a26" /><rect x="971.5" y="437.0" width="1.5" height="1.9" fill="#fff" /><rect x="975.9" y="436.2" width="2.9" height="3.6" fill="#b84a26" /><rect x="976.7" y="437.0" width="1.5" height="1.9" fill="#fff" /><rect x="981.1" y="436.2" width="2.9" height="3.6" fill="#b84a26" /><rect x="981.9" y="437.0" width="1.5" height="1.9" fill="#fff" /><rect x="986.4" y="436.2" width="2.9" height="3.6" fill="#b84a26" /><rect x="987.1" y="437.0" width="1.5" height="1.9" fill="#fff" /><rect x="991.6" y="436.2" width="2.9" height="3.6" fill="#b84a26" /><rect x="992.3" y="437.0" width="1.5" height="1.9" fill="#fff" /><rect x="996.8" y="436.2" width="2.9" height="3.6" fill="#b84a26" /><rect x="997.5" y="437.0" width="1.5" height="1.9" fill="#fff" />
<path d="M910.2 451.3 V446.0 A2.34 2.77 0 0 1 914.9 446.0 V451.3Z" fill="#8a2f1a"/>
<path d="M920.6 451.3 V446.0 A2.34 2.77 0 0 1 925.3 446.0 V451.3Z" fill="#8a2f1a"/>
<path d="M931.1 451.3 V446.0 A2.34 2.77 0 0 1 935.7 446.0 V451.3Z" fill="#8a2f1a"/>
<path d="M883.2 472.6 V456.9 A7.77 7.77 0 0 1 898.7 456.9 V472.6Z" fill="#5a1f14" stroke="#fff" stroke-width="0.9"/>
<path d="M944.5 472.6 V457.3 A8.19 8.19 0 0 1 960.9 457.3 V472.6Z" fill="#5a1f14" stroke="#fff" stroke-width="0.9"/>
<rect x="973.6" y="448.1" width="18.3" height="24.5" fill="#fff" />
<path d="M976.4 472.6 V456.6 Q979.6 450.2 982.8 455.5 Q986.0 450.2 989.1 456.6 V472.6Z" fill="#5a1f14"/>
<polygon points="982.8,422.1 994.5,448.5 971.1,448.5" fill="#2f6b4f" />
</g>
<g>
<defs><linearGradient id="tw" x1="0" x2="1"><stop offset="0" stop-color="#b8935a"/><stop offset="0.5" stop-color="#a07a45"/><stop offset="1" stop-color="#8f6a3a"/></linearGradient><linearGradient id="pier" x1="0" x2="1"><stop offset="0" stop-color="#9a7040"/><stop offset="0.48" stop-color="#8a6136"/><stop offset="0.52" stop-color="#6b4726"/><stop offset="1" stop-color="#7a532d"/></linearGradient><pattern id="lat" width="2.2" height="2.2" patternUnits="userSpaceOnUse"><rect width="2.2" height="2.2" fill="#314a66"/><circle cx="1.1" cy="1.1" r="0.62" fill="#a9c6d3"/></pattern></defs>
<polyline points="1302.9,376.4 1295.2,386.9 1283.7,396.5 1272.2,402.6 1264.6,405.1" fill="none" stroke="#2d4560" stroke-width="1.3" />
<polyline points="1302.9,380.2 1296.2,390.7 1285.6,401.3 1274.1,409.9 1266.5,414.1" fill="none" stroke="#2d4560" stroke-width="1.1" />
<polyline points="1264.6,405.1 1271.3,417.6" fill="none" stroke="#2d4560" stroke-width="1.0" />
<polyline points="1264.2,405.1 1264.2,440.5" fill="none" stroke="#8fa6b3" stroke-width="0.7" />
<polyline points="1270.3,408.0 1270.3,440.5" fill="none" stroke="#8a9aa5" stroke-width="0.7" />
<polyline points="1289.5,394.6 1289.5,440.5" fill="none" stroke="#8a9aa5" stroke-width="0.7" />
<polyline points="1278.0,399.4 1285.6,413.7" fill="none" stroke="#9ab0bb" stroke-width="0.5" />
<polyline points="1474.6,376.4 1482.3,386.9 1493.8,396.5 1505.3,402.6 1512.9,405.1" fill="none" stroke="#2d4560" stroke-width="1.3" />
<polyline points="1474.6,380.2 1481.4,390.7 1491.9,401.3 1503.4,409.9 1511.0,414.1" fill="none" stroke="#2d4560" stroke-width="1.1" />
<polyline points="1512.9,405.1 1506.2,417.6" fill="none" stroke="#2d4560" stroke-width="1.0" />
<polyline points="1513.3,405.1 1513.3,440.5" fill="none" stroke="#8fa6b3" stroke-width="0.7" />
<polyline points="1507.2,408.0 1507.2,440.5" fill="none" stroke="#8a9aa5" stroke-width="0.7" />
<polyline points="1488.1,394.6 1488.1,440.5" fill="none" stroke="#8a9aa5" stroke-width="0.7" />
<polyline points="1499.5,399.4 1491.9,413.7" fill="none" stroke="#9ab0bb" stroke-width="0.5" />
<rect x="1264.2" y="440.5" width="249.3" height="6.1" fill="#58768f" />
<rect x="1264.2" y="440.5" width="249.3" height="1.0" fill="#7d98ad" />
<rect x="1265.5" y="442.1" width="4.6" height="3.1" fill="#6f8ca3" />
<rect x="1271.8" y="442.1" width="4.6" height="3.1" fill="#6f8ca3" />
<rect x="1278.0" y="442.1" width="4.6" height="3.1" fill="#6f8ca3" />
<rect x="1284.2" y="442.1" width="4.6" height="3.1" fill="#6f8ca3" />
<rect x="1290.4" y="442.1" width="4.6" height="3.1" fill="#6f8ca3" />
<rect x="1296.7" y="442.1" width="4.6" height="3.1" fill="#6f8ca3" />
<rect x="1302.9" y="442.1" width="4.6" height="3.1" fill="#6f8ca3" />
<rect x="1309.1" y="442.1" width="4.6" height="3.1" fill="#6f8ca3" />
<rect x="1315.3" y="442.1" width="4.6" height="3.1" fill="#6f8ca3" />
<rect x="1321.5" y="442.1" width="4.6" height="3.1" fill="#6f8ca3" />
<rect x="1327.8" y="442.1" width="4.6" height="3.1" fill="#6f8ca3" />
<rect x="1334.0" y="442.1" width="4.6" height="3.1" fill="#6f8ca3" />
<rect x="1340.2" y="442.1" width="4.6" height="3.1" fill="#6f8ca3" />
<rect x="1346.4" y="442.1" width="4.6" height="3.1" fill="#6f8ca3" />
<rect x="1352.7" y="442.1" width="4.6" height="3.1" fill="#6f8ca3" />
<rect x="1358.9" y="442.1" width="4.6" height="3.1" fill="#6f8ca3" />
<rect x="1365.1" y="442.1" width="4.6" height="3.1" fill="#6f8ca3" />
<rect x="1371.3" y="442.1" width="4.6" height="3.1" fill="#6f8ca3" />
<rect x="1377.6" y="442.1" width="4.6" height="3.1" fill="#6f8ca3" />
<rect x="1383.8" y="442.1" width="4.6" height="3.1" fill="#6f8ca3" />
<rect x="1390.0" y="442.1" width="4.6" height="3.1" fill="#6f8ca3" />
<rect x="1396.2" y="442.1" width="4.6" height="3.1" fill="#6f8ca3" />
<rect x="1402.5" y="442.1" width="4.6" height="3.1" fill="#6f8ca3" />
<rect x="1408.7" y="442.1" width="4.6" height="3.1" fill="#6f8ca3" />
<rect x="1414.9" y="442.1" width="4.6" height="3.1" fill="#6f8ca3" />
<rect x="1421.1" y="442.1" width="4.6" height="3.1" fill="#6f8ca3" />
<rect x="1427.3" y="442.1" width="4.6" height="3.1" fill="#6f8ca3" />
<rect x="1433.6" y="442.1" width="4.6" height="3.1" fill="#6f8ca3" />
<rect x="1439.8" y="442.1" width="4.6" height="3.1" fill="#6f8ca3" />
<rect x="1446.0" y="442.1" width="4.6" height="3.1" fill="#6f8ca3" />
<rect x="1452.2" y="442.1" width="4.6" height="3.1" fill="#6f8ca3" />
<rect x="1458.5" y="442.1" width="4.6" height="3.1" fill="#6f8ca3" />
<rect x="1464.7" y="442.1" width="4.6" height="3.1" fill="#6f8ca3" />
<rect x="1470.9" y="442.1" width="4.6" height="3.1" fill="#6f8ca3" />
<rect x="1477.1" y="442.1" width="4.6" height="3.1" fill="#6f8ca3" />
<rect x="1483.4" y="442.1" width="4.6" height="3.1" fill="#6f8ca3" />
<rect x="1489.6" y="442.1" width="4.6" height="3.1" fill="#6f8ca3" />
<rect x="1495.8" y="442.1" width="4.6" height="3.1" fill="#6f8ca3" />
<rect x="1502.0" y="442.1" width="4.6" height="3.1" fill="#6f8ca3" />
<rect x="1508.3" y="442.1" width="4.6" height="3.1" fill="#6f8ca3" />
<rect x="1264.2" y="445.9" width="249.3" height="1.0" fill="#3f5870" />
<path d="M1335.0 456.8 Q1389.0 437.7 1443.1 456.8" fill="none" stroke="#465c72" stroke-width="1.4"/>
<polyline points="1341.0,454.8 1343.7,446.7" fill="none" stroke="#51687e" stroke-width="0.6" />
<polyline points="1341.0,454.8 1341.0,446.7" fill="none" stroke="#51687e" stroke-width="0.5" />
<polyline points="1347.0,453.0 1349.7,446.7" fill="none" stroke="#51687e" stroke-width="0.6" />
<polyline points="1347.0,453.0 1347.0,446.7" fill="none" stroke="#51687e" stroke-width="0.5" />
<polyline points="1353.0,451.5 1355.7,446.7" fill="none" stroke="#51687e" stroke-width="0.6" />
<polyline points="1353.0,451.5 1353.0,446.7" fill="none" stroke="#51687e" stroke-width="0.5" />
<polyline points="1359.0,450.2 1361.7,446.7" fill="none" stroke="#51687e" stroke-width="0.6" />
<polyline points="1359.0,450.2 1359.0,446.7" fill="none" stroke="#51687e" stroke-width="0.5" />
<polyline points="1365.0,449.1 1367.7,446.7" fill="none" stroke="#51687e" stroke-width="0.6" />
<polyline points="1365.0,449.1 1365.0,446.7" fill="none" stroke="#51687e" stroke-width="0.5" />
<polyline points="1371.0,448.3 1373.7,446.7" fill="none" stroke="#51687e" stroke-width="0.6" />
<polyline points="1371.0,448.3 1371.0,446.7" fill="none" stroke="#51687e" stroke-width="0.5" />
<polyline points="1377.0,447.7 1379.7,446.7" fill="none" stroke="#51687e" stroke-width="0.6" />
<polyline points="1377.0,447.7 1377.0,446.7" fill="none" stroke="#51687e" stroke-width="0.5" />
<polyline points="1401.0,447.7 1398.4,446.7" fill="none" stroke="#51687e" stroke-width="0.6" />
<polyline points="1401.0,447.7 1401.0,446.7" fill="none" stroke="#51687e" stroke-width="0.5" />
<polyline points="1407.0,448.3 1404.4,446.7" fill="none" stroke="#51687e" stroke-width="0.6" />
<polyline points="1407.0,448.3 1407.0,446.7" fill="none" stroke="#51687e" stroke-width="0.5" />
<polyline points="1413.0,449.1 1410.4,446.7" fill="none" stroke="#51687e" stroke-width="0.6" />
<polyline points="1413.0,449.1 1413.0,446.7" fill="none" stroke="#51687e" stroke-width="0.5" />
<polyline points="1419.0,450.2 1416.4,446.7" fill="none" stroke="#51687e" stroke-width="0.6" />
<polyline points="1419.0,450.2 1419.0,446.7" fill="none" stroke="#51687e" stroke-width="0.5" />
<polyline points="1425.0,451.5 1422.4,446.7" fill="none" stroke="#51687e" stroke-width="0.6" />
<polyline points="1425.0,451.5 1425.0,446.7" fill="none" stroke="#51687e" stroke-width="0.5" />
<polyline points="1431.1,453.0 1428.4,446.7" fill="none" stroke="#51687e" stroke-width="0.6" />
<polyline points="1431.1,453.0 1431.1,446.7" fill="none" stroke="#51687e" stroke-width="0.5" />
<polyline points="1437.1,454.8 1434.4,446.7" fill="none" stroke="#51687e" stroke-width="0.6" />
<polyline points="1437.1,454.8 1437.1,446.7" fill="none" stroke="#51687e" stroke-width="0.5" />
<rect x="1327.8" y="355.9" width="122.0" height="11.9" fill="url(#lat)" />
<rect x="1327.8" y="355.5" width="122.0" height="1.5" fill="#2f4863" />
<rect x="1327.8" y="363.0" width="122.0" height="4.8" fill="#6a879f" />
<rect x="1327.8" y="364.3" width="122.0" height="1.1" fill="#a8bfcc" />
<rect x="1327.8" y="367.0" width="122.0" height="1.0" fill="#3a536e" />
<rect x="1353.0" y="354.7" width="6.3" height="7.3" fill="#c9d3d8" />
<rect x="1355.3" y="356.7" width="1.7" height="3.4" fill="#c8484f" />
<rect x="1418.2" y="354.7" width="6.3" height="7.3" fill="#7f93a8" />
<rect x="1420.5" y="356.7" width="1.7" height="3.4" fill="#a0586a" />
<polyline points="1371.2,333.3 1371.2,355.9" fill="none" stroke="#6d7f8a" stroke-width="0.7" />
<polyline points="1406.3,332.9 1406.3,355.9" fill="none" stroke="#8d9aa0" stroke-width="0.7" />
<rect x="1371.4" y="333.9" width="8.6" height="7.1" fill="#24327a" />
<polyline points="1371.4,333.9 1380.0,341.0" fill="none" stroke="#fff" stroke-width="1.0" />
<polyline points="1371.4,341.0 1380.0,333.9" fill="none" stroke="#fff" stroke-width="1.0" />
<polyline points="1371.4,337.4 1380.0,337.4" fill="none" stroke="#fff" stroke-width="1.6" />
<polyline points="1375.7,333.9 1375.7,341.0" fill="none" stroke="#fff" stroke-width="1.6" />
<polyline points="1371.4,337.4 1380.0,337.4" fill="none" stroke="#d0202c" stroke-width="0.8" />
<polyline points="1375.7,333.9 1375.7,341.0" fill="none" stroke="#d0202c" stroke-width="0.8" />
<rect x="1406.5" y="333.9" width="8.0" height="7.1" fill="#fff" />
<polyline points="1406.5,337.4 1414.5,337.4" fill="none" stroke="#d0202c" stroke-width="0.8" />
<polyline points="1410.5,333.9 1410.5,341.0" fill="none" stroke="#d0202c" stroke-width="0.8" />
<rect x="1302.9" y="340.0" width="24.9" height="100.2" fill="url(#tw)" />
<rect x="1302.1" y="340.0" width="5.7" height="100.2" fill="#a8854f" />
<rect x="1322.4" y="340.0" width="6.1" height="100.2" fill="#8d6a3c" />
<rect x="1302.1" y="352.4" width="26.4" height="1.5" fill="#c9ad78" />
<rect x="1302.1" y="370.6" width="26.4" height="1.5" fill="#c9ad78" />
<rect x="1302.1" y="375.4" width="26.4" height="1.5" fill="#c9ad78" />
<rect x="1302.1" y="398.4" width="26.4" height="1.5" fill="#c9ad78" />
<rect x="1302.1" y="415.6" width="26.4" height="1.5" fill="#c9ad78" />
<rect x="1302.9" y="358.2" width="24.9" height="0.8" fill="#7d5c30" />
<rect x="1302.9" y="380.2" width="24.9" height="0.8" fill="#7d5c30" />
<rect x="1302.9" y="394.6" width="24.9" height="0.8" fill="#7d5c30" />
<rect x="1302.9" y="412.8" width="24.9" height="0.8" fill="#7d5c30" />
<rect x="1302.9" y="429.0" width="24.9" height="0.8" fill="#7d5c30" />
<polygon points="1310.5,352.4 1310.5,336.2 1315.5,330.4 1320.5,336.2 1320.5,352.4" fill="#e8e6e4" />
<rect x="1309.8" y="352.4" width="11.5" height="18.2" fill="#cfc5b4" />
<rect x="1313.6" y="341.9" width="3.8" height="6.7" fill="#2a2f3a" />
<rect x="1313.6" y="357.2" width="3.8" height="4.8" fill="#2a2f3a" />
<rect x="1312.8" y="363.0" width="5.4" height="3.3" fill="#e9e9ea" />
<rect x="1310.9" y="384.6" width="9.2" height="7.3" fill="#e4e0d8" />
<rect x="1312.1" y="385.4" width="1.1" height="6.1" fill="#2a2f3a" />
<rect x="1314.7" y="385.4" width="1.1" height="6.1" fill="#2a2f3a" />
<rect x="1317.4" y="385.4" width="1.1" height="6.1" fill="#2a2f3a" />
<rect x="1310.9" y="404.2" width="9.2" height="6.9" fill="#e4e0d8" />
<rect x="1312.1" y="404.9" width="1.1" height="5.7" fill="#2a2f3a" />
<rect x="1314.7" y="404.9" width="1.1" height="5.7" fill="#2a2f3a" />
<rect x="1317.4" y="404.9" width="1.1" height="5.7" fill="#2a2f3a" />
<rect x="1310.5" y="420.4" width="10.0" height="17.2" fill="#ddd6c8" />
<rect x="1311.7" y="422.3" width="1.3" height="14.4" fill="#2a2f3a" />
<rect x="1314.6" y="422.3" width="1.3" height="14.4" fill="#2a2f3a" />
<rect x="1317.4" y="422.3" width="1.3" height="14.4" fill="#2a2f3a" />
<rect x="1310.5" y="429.0" width="10.0" height="1.1" fill="#ece8e0" />
<polygon points="1305.4,320.5 1308.6,340.6 1301.9,340.6" fill="#3d5570" />
<polygon points="1305.4,320.5 1306.3,340.6 1304.0,340.6" fill="#5a7690" />
<polygon points="1325.1,320.5 1328.7,340.6 1322.0,340.6" fill="#3d5570" />
<polygon points="1325.1,320.5 1326.2,340.6 1323.9,340.6" fill="#5a7690" />
<polygon points="1315.5,309.4 1320.5,336.2 1310.5,336.2" fill="#1f3048" />
<polygon points="1315.5,309.4 1317.0,336.2 1314.4,336.2" fill="#34506e" />
<polyline points="1315.5,306.1 1315.5,310.3" fill="none" stroke="#d9b04a" stroke-width="0.9" />
<polyline points="1305.4,318.4 1305.4,321.0" fill="none" stroke="#d9b04a" stroke-width="0.6" />
<polyline points="1325.1,318.4 1325.1,321.0" fill="none" stroke="#d9b04a" stroke-width="0.6" />
<rect x="1449.8" y="340.0" width="24.9" height="100.2" fill="url(#tw)" />
<rect x="1449.0" y="340.0" width="5.7" height="100.2" fill="#a8854f" />
<rect x="1469.3" y="340.0" width="6.1" height="100.2" fill="#8d6a3c" />
<rect x="1449.0" y="352.4" width="26.4" height="1.5" fill="#c9ad78" />
<rect x="1449.0" y="370.6" width="26.4" height="1.5" fill="#c9ad78" />
<rect x="1449.0" y="375.4" width="26.4" height="1.5" fill="#c9ad78" />
<rect x="1449.0" y="398.4" width="26.4" height="1.5" fill="#c9ad78" />
<rect x="1449.0" y="415.6" width="26.4" height="1.5" fill="#c9ad78" />
<rect x="1449.8" y="358.2" width="24.9" height="0.8" fill="#7d5c30" />
<rect x="1449.8" y="380.2" width="24.9" height="0.8" fill="#7d5c30" />
<rect x="1449.8" y="394.6" width="24.9" height="0.8" fill="#7d5c30" />
<rect x="1449.8" y="412.8" width="24.9" height="0.8" fill="#7d5c30" />
<rect x="1449.8" y="429.0" width="24.9" height="0.8" fill="#7d5c30" />
<polygon points="1457.4,352.4 1457.4,336.2 1462.4,330.4 1467.4,336.2 1467.4,352.4" fill="#e8e6e4" />
<rect x="1456.6" y="352.4" width="11.5" height="18.2" fill="#cfc5b4" />
<rect x="1460.5" y="341.9" width="3.8" height="6.7" fill="#2a2f3a" />
<rect x="1460.5" y="357.2" width="3.8" height="4.8" fill="#2a2f3a" />
<rect x="1459.7" y="363.0" width="5.4" height="3.3" fill="#e9e9ea" />
<rect x="1457.8" y="384.6" width="9.2" height="7.3" fill="#e4e0d8" />
<rect x="1458.9" y="385.4" width="1.1" height="6.1" fill="#2a2f3a" />
<rect x="1461.6" y="385.4" width="1.1" height="6.1" fill="#2a2f3a" />
<rect x="1464.3" y="385.4" width="1.1" height="6.1" fill="#2a2f3a" />
<rect x="1457.8" y="404.2" width="9.2" height="6.9" fill="#e4e0d8" />
<rect x="1458.9" y="404.9" width="1.1" height="5.7" fill="#2a2f3a" />
<rect x="1461.6" y="404.9" width="1.1" height="5.7" fill="#2a2f3a" />
<rect x="1464.3" y="404.9" width="1.1" height="5.7" fill="#2a2f3a" />
<rect x="1457.4" y="420.4" width="10.0" height="17.2" fill="#ddd6c8" />
<rect x="1458.6" y="422.3" width="1.3" height="14.4" fill="#2a2f3a" />
<rect x="1461.4" y="422.3" width="1.3" height="14.4" fill="#2a2f3a" />
<rect x="1464.3" y="422.3" width="1.3" height="14.4" fill="#2a2f3a" />
<rect x="1457.4" y="429.0" width="10.0" height="1.1" fill="#ece8e0" />
<polygon points="1452.2,320.5 1455.5,340.6 1448.8,340.6" fill="#3d5570" />
<polygon points="1452.2,320.5 1453.2,340.6 1450.9,340.6" fill="#5a7690" />
<polygon points="1472.0,320.5 1475.6,340.6 1468.9,340.6" fill="#3d5570" />
<polygon points="1472.0,320.5 1473.1,340.6 1470.8,340.6" fill="#5a7690" />
<polygon points="1462.4,309.4 1467.4,336.2 1457.4,336.2" fill="#1f3048" />
<polygon points="1462.4,309.4 1463.9,336.2 1461.2,336.2" fill="#34506e" />
<polyline points="1462.4,306.1 1462.4,310.3" fill="none" stroke="#d9b04a" stroke-width="0.9" />
<polyline points="1452.2,318.4 1452.2,321.0" fill="none" stroke="#d9b04a" stroke-width="0.6" />
<polyline points="1472.0,318.4 1472.0,321.0" fill="none" stroke="#d9b04a" stroke-width="0.6" />
<rect x="1296.2" y="440.2" width="38.9" height="27.6" fill="url(#pier)" />
<rect x="1443.1" y="440.2" width="38.9" height="27.6" fill="url(#pier)" />
<rect x="1296.2" y="442.8" width="38.9" height="0.3" fill="#5e3f20" opacity="0.45"/>
<rect x="1296.2" y="445.7" width="38.9" height="0.3" fill="#5e3f20" opacity="0.45"/>
<rect x="1296.2" y="448.6" width="38.9" height="0.3" fill="#5e3f20" opacity="0.45"/>
<rect x="1296.2" y="451.5" width="38.9" height="0.3" fill="#5e3f20" opacity="0.45"/>
<rect x="1296.2" y="454.3" width="38.9" height="0.3" fill="#5e3f20" opacity="0.45"/>
<rect x="1296.2" y="457.2" width="38.9" height="0.3" fill="#5e3f20" opacity="0.45"/>
<rect x="1296.2" y="460.1" width="38.9" height="0.3" fill="#5e3f20" opacity="0.45"/>
<rect x="1296.2" y="462.9" width="38.9" height="0.3" fill="#5e3f20" opacity="0.45"/>
<rect x="1296.2" y="465.8" width="38.9" height="0.3" fill="#5e3f20" opacity="0.45"/>
<rect x="1443.1" y="442.8" width="38.9" height="0.3" fill="#5e3f20" opacity="0.45"/>
<rect x="1443.1" y="445.7" width="38.9" height="0.3" fill="#5e3f20" opacity="0.45"/>
<rect x="1443.1" y="448.6" width="38.9" height="0.3" fill="#5e3f20" opacity="0.45"/>
<rect x="1443.1" y="451.5" width="38.9" height="0.3" fill="#5e3f20" opacity="0.45"/>
<rect x="1443.1" y="454.3" width="38.9" height="0.3" fill="#5e3f20" opacity="0.45"/>
<rect x="1443.1" y="457.2" width="38.9" height="0.3" fill="#5e3f20" opacity="0.45"/>
<rect x="1443.1" y="460.1" width="38.9" height="0.3" fill="#5e3f20" opacity="0.45"/>
<rect x="1443.1" y="462.9" width="38.9" height="0.3" fill="#5e3f20" opacity="0.45"/>
<rect x="1443.1" y="465.8" width="38.9" height="0.3" fill="#5e3f20" opacity="0.45"/>
</g>
<g><path d="M493.7 556.1 L497.7 565.2 L501.7 570.0 L504.9 572.3 L505.4 581.9 L504.1 589.9 L505.7 601.1 L507.6 610.7 L507.3 618.6 L509.2 628.2 L511.7 633.0 L512.1 637.5 L518.4 640.2 L525.6 643.4 L529.6 647.4 L532.8 653.8 L535.2 661.7 L539.2 669.7 L543.7 673.7 L541.6 679.3 L540.5 687.3 L542.4 694.5 L545.6 700.0 L545.6 696.4 L550.4 707.6 L547.2 713.9 L550.4 721.9 L552.8 731.5 L552.0 741.1 L548.8 745.9 L544.0 749.9 L539.2 755.4 L545.6 757.8 L550.4 763.4 L555.2 760.2 L557.5 754.6 L566.3 753.0 L577.5 755.4 L585.5 758.6 L591.9 765.0 L596.7 773.0 L598.6 782.6 L598.0 789.6 L594.8 800.8 L590.0 811.9 L585.3 819.9 L578.9 826.3 L572.5 832.7 L567.7 835.9 L561.3 834.3 L558.1 837.5 L562.9 842.3 L559.7 847.0 L554.9 850.2 L548.5 850.2 L543.8 850.2 L531.0 845.4 L539.0 850.2 L548.5 855.0 L558.1 858.2 L561.3 861.4 L567.7 859.8 L579.7 860.6 L578.9 866.2 L577.3 875.8 L570.9 879.0 L562.9 882.2 L558.9 888.5 L553.3 886.9 L548.5 890.1 L542.2 891.7 L540.0 891.7 L530.6 894.9 L522.6 891.7 L514.6 888.5 L503.5 889.3 L493.9 890.1 L492.3 885.3 L485.9 888.5 L479.5 885.3 L473.1 877.4 L477.9 883.8 L481.1 890.1 L481.9 891.7 L477.9 898.1 L471.5 896.5 L467.5 890.1 L463.6 890.1 L455.6 887.7 L449.2 885.3 L449.2 892.5 L439.6 890.1 L430.0 890.1 L423.7 885.3 L417.3 880.6 L406.1 880.6 L396.5 882.2 L394.9 886.9 L390.1 891.7 L388.5 901.3 L382.2 907.7 L377.4 907.7 L374.2 902.1 L367.0 899.7 L363.0 894.1 L353.4 894.9 L345.4 894.1 L337.5 899.7 L331.1 901.3 L327.9 910.9 L322.3 912.5 L320.7 907.7 L316.7 901.3 L311.9 902.9 L306.3 903.7 L307.9 898.9 L313.5 895.7 L321.5 894.1 L327.9 890.1 L333.5 883.8 L337.5 877.4 L343.8 875.0 L350.2 869.4 L357.4 864.6 L358.2 856.6 L361.4 851.5 L369.4 851.8 L375.8 849.4 L372.6 845.4 L375.8 841.5 L385.3 841.5 L396.5 843.0 L401.3 847.0 L407.7 848.6 L417.3 850.2 L418.9 843.8 L423.7 835.9 L432.4 831.1 L433.2 826.3 L444.4 814.3 L435.6 811.9 L428.4 805.5 L423.5 795.3 L421.9 789.0 L425.1 782.6 L429.9 774.6 L425.1 766.6 L426.7 760.2 L431.5 752.3 L429.9 745.9 L429.1 739.5 L433.8 737.1 L441.0 731.5 L439.4 721.9 L437.0 713.9 L433.0 710.8 L433.8 705.2 L437.0 699.6 L437.0 700.0 L437.8 693.7 L441.0 688.9 L445.0 684.1 L441.8 679.3 L443.4 672.9 L448.2 669.7 L449.8 663.3 L453.0 658.5 L453.0 652.2 L448.2 655.3 L446.6 649.8 L445.0 652.2 L439.4 653.8 L436.2 648.2 L433.8 643.4 L431.5 637.0 L429.1 631.4 L431.5 626.6 L433.8 620.2 L437.8 615.4 L440.2 609.1 L445.0 605.1 L453.0 605.9 L453.8 599.5 L459.4 597.1 L465.8 593.1 L470.6 588.3 L475.3 583.5 L480.1 581.1 L485.2 577.9 L486.5 573.9 L483.6 565.2 L488.1 562.0Z" fill="#1c2734" transform="translate(-2.5,4)"/><path d="M493.7 556.1 L497.7 565.2 L501.7 570.0 L504.9 572.3 L505.4 581.9 L504.1 589.9 L505.7 601.1 L507.6 610.7 L507.3 618.6 L509.2 628.2 L511.7 633.0 L512.1 637.5 L518.4 640.2 L525.6 643.4 L529.6 647.4 L532.8 653.8 L535.2 661.7 L539.2 669.7 L543.7 673.7 L541.6 679.3 L540.5 687.3 L542.4 694.5 L545.6 700.0 L545.6 696.4 L550.4 707.6 L547.2 713.9 L550.4 721.9 L552.8 731.5 L552.0 741.1 L548.8 745.9 L544.0 749.9 L539.2 755.4 L545.6 757.8 L550.4 763.4 L555.2 760.2 L557.5 754.6 L566.3 753.0 L577.5 755.4 L585.5 758.6 L591.9 765.0 L596.7 773.0 L598.6 782.6 L598.0 789.6 L594.8 800.8 L590.0 811.9 L585.3 819.9 L578.9 826.3 L572.5 832.7 L567.7 835.9 L561.3 834.3 L558.1 837.5 L562.9 842.3 L559.7 847.0 L554.9 850.2 L548.5 850.2 L543.8 850.2 L531.0 845.4 L539.0 850.2 L548.5 855.0 L558.1 858.2 L561.3 861.4 L567.7 859.8 L579.7 860.6 L578.9 866.2 L577.3 875.8 L570.9 879.0 L562.9 882.2 L558.9 888.5 L553.3 886.9 L548.5 890.1 L542.2 891.7 L540.0 891.7 L530.6 894.9 L522.6 891.7 L514.6 888.5 L503.5 889.3 L493.9 890.1 L492.3 885.3 L485.9 888.5 L479.5 885.3 L473.1 877.4 L477.9 883.8 L481.1 890.1 L481.9 891.7 L477.9 898.1 L471.5 896.5 L467.5 890.1 L463.6 890.1 L455.6 887.7 L449.2 885.3 L449.2 892.5 L439.6 890.1 L430.0 890.1 L423.7 885.3 L417.3 880.6 L406.1 880.6 L396.5 882.2 L394.9 886.9 L390.1 891.7 L388.5 901.3 L382.2 907.7 L377.4 907.7 L374.2 902.1 L367.0 899.7 L363.0 894.1 L353.4 894.9 L345.4 894.1 L337.5 899.7 L331.1 901.3 L327.9 910.9 L322.3 912.5 L320.7 907.7 L316.7 901.3 L311.9 902.9 L306.3 903.7 L307.9 898.9 L313.5 895.7 L321.5 894.1 L327.9 890.1 L333.5 883.8 L337.5 877.4 L343.8 875.0 L350.2 869.4 L357.4 864.6 L358.2 856.6 L361.4 851.5 L369.4 851.8 L375.8 849.4 L372.6 845.4 L375.8 841.5 L385.3 841.5 L396.5 843.0 L401.3 847.0 L407.7 848.6 L417.3 850.2 L418.9 843.8 L423.7 835.9 L432.4 831.1 L433.2 826.3 L444.4 814.3 L435.6 811.9 L428.4 805.5 L423.5 795.3 L421.9 789.0 L425.1 782.6 L429.9 774.6 L425.1 766.6 L426.7 760.2 L431.5 752.3 L429.9 745.9 L429.1 739.5 L433.8 737.1 L441.0 731.5 L439.4 721.9 L437.0 713.9 L433.0 710.8 L433.8 705.2 L437.0 699.6 L437.0 700.0 L437.8 693.7 L441.0 688.9 L445.0 684.1 L441.8 679.3 L443.4 672.9 L448.2 669.7 L449.8 663.3 L453.0 658.5 L453.0 652.2 L448.2 655.3 L446.6 649.8 L445.0 652.2 L439.4 653.8 L436.2 648.2 L433.8 643.4 L431.5 637.0 L429.1 631.4 L431.5 626.6 L433.8 620.2 L437.8 615.4 L440.2 609.1 L445.0 605.1 L453.0 605.9 L453.8 599.5 L459.4 597.1 L465.8 593.1 L470.6 588.3 L475.3 583.5 L480.1 581.1 L485.2 577.9 L486.5 573.9 L483.6 565.2 L488.1 562.0Z" fill="#c55a11" stroke="#fff" stroke-width="2.2" stroke-linejoin="round"/><path d="M493.7 556.1 L497.7 565.2 L501.7 570.0 L504.9 572.3 L505.4 581.9 L504.1 589.9 L505.7 601.1 L507.6 610.7 L507.3 618.6 L509.2 628.2 L511.7 633.0 L512.1 637.5 L518.4 640.2 L525.6 643.4 L529.6 647.4 L532.8 653.8 L535.2 661.7 L539.2 669.7 L543.7 673.7 L541.6 679.3 L540.5 687.3 L542.4 694.5 L545.6 700.0 L545.6 696.4 L550.4 707.6 L547.2 713.9 L550.4 721.9 L552.8 731.5 L552.0 741.1 L548.8 745.9 L544.0 749.9 L539.2 755.4 L545.6 757.8 L550.4 763.4 L555.2 760.2 L557.5 754.6 L566.3 753.0 L577.5 755.4 L585.5 758.6 L591.9 765.0 L596.7 773.0 L598.6 782.6 L598.0 789.6 L594.8 800.8 L590.0 811.9 L585.3 819.9 L578.9 826.3 L572.5 832.7 L567.7 835.9 L561.3 834.3 L558.1 837.5 L562.9 842.3 L559.7 847.0 L554.9 850.2 L548.5 850.2 L543.8 850.2 L531.0 845.4 L539.0 850.2 L548.5 855.0 L558.1 858.2 L561.3 861.4 L567.7 859.8 L579.7 860.6 L578.9 866.2 L577.3 875.8 L570.9 879.0 L562.9 882.2 L558.9 888.5 L553.3 886.9 L548.5 890.1 L542.2 891.7 L540.0 891.7 L530.6 894.9 L522.6 891.7 L514.6 888.5 L503.5 889.3 L493.9 890.1 L492.3 885.3 L485.9 888.5 L479.5 885.3 L473.1 877.4 L477.9 883.8 L481.1 890.1 L481.9 891.7 L477.9 898.1 L471.5 896.5 L467.5 890.1 L463.6 890.1 L455.6 887.7 L449.2 885.3 L449.2 892.5 L439.6 890.1 L430.0 890.1 L423.7 885.3 L417.3 880.6 L406.1 880.6 L396.5 882.2 L394.9 886.9 L390.1 891.7 L388.5 901.3 L382.2 907.7 L377.4 907.7 L374.2 902.1 L367.0 899.7 L363.0 894.1 L353.4 894.9 L345.4 894.1 L337.5 899.7 L331.1 901.3 L327.9 910.9 L322.3 912.5 L320.7 907.7 L316.7 901.3 L311.9 902.9 L306.3 903.7 L307.9 898.9 L313.5 895.7 L321.5 894.1 L327.9 890.1 L333.5 883.8 L337.5 877.4 L343.8 875.0 L350.2 869.4 L357.4 864.6 L358.2 856.6 L361.4 851.5 L369.4 851.8 L375.8 849.4 L372.6 845.4 L375.8 841.5 L385.3 841.5 L396.5 843.0 L401.3 847.0 L407.7 848.6 L417.3 850.2 L418.9 843.8 L423.7 835.9 L432.4 831.1 L433.2 826.3 L444.4 814.3 L435.6 811.9 L428.4 805.5 L423.5 795.3 L421.9 789.0 L425.1 782.6 L429.9 774.6 L425.1 766.6 L426.7 760.2 L431.5 752.3 L429.9 745.9 L429.1 739.5 L433.8 737.1 L441.0 731.5 L439.4 721.9 L437.0 713.9 L433.0 710.8 L433.8 705.2 L437.0 699.6 L437.0 700.0 L437.8 693.7 L441.0 688.9 L445.0 684.1 L441.8 679.3 L443.4 672.9 L448.2 669.7 L449.8 663.3 L453.0 658.5 L453.0 652.2 L448.2 655.3 L446.6 649.8 L445.0 652.2 L439.4 653.8 L436.2 648.2 L433.8 643.4 L431.5 637.0 L429.1 631.4 L431.5 626.6 L433.8 620.2 L437.8 615.4 L440.2 609.1 L445.0 605.1 L453.0 605.9 L453.8 599.5 L459.4 597.1 L465.8 593.1 L470.6 588.3 L475.3 583.5 L480.1 581.1 L485.2 577.9 L486.5 573.9 L483.6 565.2 L488.1 562.0Z" fill="#c55a11"/></g>
<g><path d="M786.2 565.2 L791.0 560.4 L802.2 557.2 L814.9 555.6 L826.1 557.2 L832.5 562.0 L840.5 566.8 L848.4 572.3 L853.2 574.7 L861.2 572.3 L872.4 570.8 L883.6 571.5 L889.9 577.1 L888.3 584.3 L882.0 589.1 L875.6 593.1 L871.6 597.9 L875.6 604.3 L880.4 611.5 L875.6 614.6 L871.6 617.0 L866.0 613.0 L867.6 620.2 L869.2 628.2 L877.2 632.2 L888.3 637.0 L899.5 643.4 L895.5 649.8 L890.7 656.9 L888.3 661.7 L899.5 667.3 L910.7 672.1 L923.5 676.1 L936.2 678.5 L949.0 680.1 L960.0 684.9 L961.8 686.2 L973.0 688.6 L985.8 689.4 L995.3 691.0 L1004.9 689.4 L1007.3 685.4 L1003.6 679.8 L1004.1 673.4 L1008.1 669.4 L1012.9 668.6 L1014.5 673.4 L1012.9 678.2 L1016.1 683.0 L1022.5 683.8 L1025.7 686.2 L1036.8 683.0 L1049.6 683.0 L1064.0 681.4 L1063.2 678.2 L1056.0 675.0 L1056.8 671.8 L1065.6 669.4 L1072.0 667.0 L1078.3 659.1 L1086.3 654.3 L1094.3 648.7 L1103.9 648.7 L1111.9 646.3 L1115.9 644.7 L1119.8 647.9 L1123.0 651.1 L1123.0 655.9 L1129.4 655.9 L1136.6 656.7 L1137.4 661.5 L1132.6 664.6 L1134.2 670.2 L1124.6 671.8 L1116.7 675.8 L1108.7 681.4 L1107.9 689.4 L1104.7 695.8 L1103.9 703.8 L1099.1 714.9 L1087.9 714.9 L1086.3 721.3 L1087.9 727.7 L1085.5 732.5 L1085.5 740.5 L1081.5 742.9 L1077.5 740.5 L1075.2 732.5 L1071.2 726.1 L1072.0 720.5 L1065.6 722.9 L1062.4 729.3 L1059.2 730.9 L1055.2 723.7 L1055.2 718.9 L1060.8 714.9 L1065.6 713.3 L1072.0 705.3 L1065.6 703.8 L1049.6 703.4 L1032.1 702.2 L1030.5 694.2 L1025.7 695.0 L1020.9 694.2 L1016.1 691.8 L1011.3 691.0 L1007.3 694.2 L1011.3 699.0 L1017.7 702.2 L1016.1 706.1 L1009.7 708.5 L1006.5 710.1 L1011.3 714.9 L1016.1 719.7 L1015.3 726.1 L1017.7 732.5 L1020.9 738.9 L1014.8 743.1 L1010.0 742.3 L1006.8 747.1 L997.3 751.1 L992.5 755.9 L993.3 763.0 L987.7 768.6 L978.1 772.6 L970.1 774.2 L963.8 778.2 L955.8 787.8 L945.9 798.0 L934.7 804.4 L922.0 810.8 L921.2 816.3 L914.0 819.5 L906.0 820.3 L898.0 825.9 L891.6 825.9 L886.8 832.3 L887.6 841.1 L886.8 850.7 L889.2 860.2 L886.8 868.2 L881.3 876.2 L882.1 885.8 L882.1 895.3 L875.7 896.1 L870.9 901.7 L866.9 908.1 L858.1 911.3 L853.3 916.1 L850.1 920.9 L842.2 924.9 L834.2 921.7 L827.8 916.1 L823.0 908.1 L821.4 900.1 L816.6 890.6 L811.8 881.0 L805.4 873.0 L799.1 861.8 L794.3 850.7 L787.9 837.9 L781.5 826.7 L777.5 815.5 L777.4 808.1 L776.6 798.5 L774.2 789.0 L774.2 779.4 L771.8 773.0 L775.0 766.6 L777.4 758.6 L775.0 752.3 L778.2 745.9 L779.8 740.8 L771.8 741.1 L768.6 744.3 L768.6 751.5 L765.4 754.6 L757.5 757.8 L747.9 760.2 L739.9 757.8 L731.9 751.5 L723.9 744.3 L719.2 737.9 L730.3 736.3 L739.9 733.9 L743.1 728.3 L738.3 730.7 L730.3 732.3 L720.8 730.7 L712.8 725.9 L707.2 721.1 L709.6 717.9 L717.6 713.9 L728.7 713.9 L739.9 713.9 L749.5 713.9 L753.5 710.0 L751.1 706.0 L747.9 700.4 L743.1 696.4 L739.1 691.6 L739.1 693.7 L739.9 687.3 L732.7 683.3 L731.9 679.3 L736.7 673.7 L745.5 668.1 L747.9 669.7 L759.1 670.5 L768.6 668.1 L776.6 660.1 L787.0 653.8 L791.8 645.8 L799.0 641.8 L803.8 634.6 L810.1 629.8 L810.1 623.4 L813.3 618.6 L820.5 616.2 L819.7 613.0 L808.5 607.5 L798.2 603.5 L798.2 596.3 L796.6 588.3 L799.8 583.5 L805.3 579.5 L802.2 574.7 L795.8 570.8 L787.0 568.4Z" fill="#1c2430" transform="translate(-2.5,4)"/><path d="M786.2 565.2 L791.0 560.4 L802.2 557.2 L814.9 555.6 L826.1 557.2 L832.5 562.0 L840.5 566.8 L848.4 572.3 L853.2 574.7 L861.2 572.3 L872.4 570.8 L883.6 571.5 L889.9 577.1 L888.3 584.3 L882.0 589.1 L875.6 593.1 L871.6 597.9 L875.6 604.3 L880.4 611.5 L875.6 614.6 L871.6 617.0 L866.0 613.0 L867.6 620.2 L869.2 628.2 L877.2 632.2 L888.3 637.0 L899.5 643.4 L895.5 649.8 L890.7 656.9 L888.3 661.7 L899.5 667.3 L910.7 672.1 L923.5 676.1 L936.2 678.5 L949.0 680.1 L960.0 684.9 L961.8 686.2 L973.0 688.6 L985.8 689.4 L995.3 691.0 L1004.9 689.4 L1007.3 685.4 L1003.6 679.8 L1004.1 673.4 L1008.1 669.4 L1012.9 668.6 L1014.5 673.4 L1012.9 678.2 L1016.1 683.0 L1022.5 683.8 L1025.7 686.2 L1036.8 683.0 L1049.6 683.0 L1064.0 681.4 L1063.2 678.2 L1056.0 675.0 L1056.8 671.8 L1065.6 669.4 L1072.0 667.0 L1078.3 659.1 L1086.3 654.3 L1094.3 648.7 L1103.9 648.7 L1111.9 646.3 L1115.9 644.7 L1119.8 647.9 L1123.0 651.1 L1123.0 655.9 L1129.4 655.9 L1136.6 656.7 L1137.4 661.5 L1132.6 664.6 L1134.2 670.2 L1124.6 671.8 L1116.7 675.8 L1108.7 681.4 L1107.9 689.4 L1104.7 695.8 L1103.9 703.8 L1099.1 714.9 L1087.9 714.9 L1086.3 721.3 L1087.9 727.7 L1085.5 732.5 L1085.5 740.5 L1081.5 742.9 L1077.5 740.5 L1075.2 732.5 L1071.2 726.1 L1072.0 720.5 L1065.6 722.9 L1062.4 729.3 L1059.2 730.9 L1055.2 723.7 L1055.2 718.9 L1060.8 714.9 L1065.6 713.3 L1072.0 705.3 L1065.6 703.8 L1049.6 703.4 L1032.1 702.2 L1030.5 694.2 L1025.7 695.0 L1020.9 694.2 L1016.1 691.8 L1011.3 691.0 L1007.3 694.2 L1011.3 699.0 L1017.7 702.2 L1016.1 706.1 L1009.7 708.5 L1006.5 710.1 L1011.3 714.9 L1016.1 719.7 L1015.3 726.1 L1017.7 732.5 L1020.9 738.9 L1014.8 743.1 L1010.0 742.3 L1006.8 747.1 L997.3 751.1 L992.5 755.9 L993.3 763.0 L987.7 768.6 L978.1 772.6 L970.1 774.2 L963.8 778.2 L955.8 787.8 L945.9 798.0 L934.7 804.4 L922.0 810.8 L921.2 816.3 L914.0 819.5 L906.0 820.3 L898.0 825.9 L891.6 825.9 L886.8 832.3 L887.6 841.1 L886.8 850.7 L889.2 860.2 L886.8 868.2 L881.3 876.2 L882.1 885.8 L882.1 895.3 L875.7 896.1 L870.9 901.7 L866.9 908.1 L858.1 911.3 L853.3 916.1 L850.1 920.9 L842.2 924.9 L834.2 921.7 L827.8 916.1 L823.0 908.1 L821.4 900.1 L816.6 890.6 L811.8 881.0 L805.4 873.0 L799.1 861.8 L794.3 850.7 L787.9 837.9 L781.5 826.7 L777.5 815.5 L777.4 808.1 L776.6 798.5 L774.2 789.0 L774.2 779.4 L771.8 773.0 L775.0 766.6 L777.4 758.6 L775.0 752.3 L778.2 745.9 L779.8 740.8 L771.8 741.1 L768.6 744.3 L768.6 751.5 L765.4 754.6 L757.5 757.8 L747.9 760.2 L739.9 757.8 L731.9 751.5 L723.9 744.3 L719.2 737.9 L730.3 736.3 L739.9 733.9 L743.1 728.3 L738.3 730.7 L730.3 732.3 L720.8 730.7 L712.8 725.9 L707.2 721.1 L709.6 717.9 L717.6 713.9 L728.7 713.9 L739.9 713.9 L749.5 713.9 L753.5 710.0 L751.1 706.0 L747.9 700.4 L743.1 696.4 L739.1 691.6 L739.1 693.7 L739.9 687.3 L732.7 683.3 L731.9 679.3 L736.7 673.7 L745.5 668.1 L747.9 669.7 L759.1 670.5 L768.6 668.1 L776.6 660.1 L787.0 653.8 L791.8 645.8 L799.0 641.8 L803.8 634.6 L810.1 629.8 L810.1 623.4 L813.3 618.6 L820.5 616.2 L819.7 613.0 L808.5 607.5 L798.2 603.5 L798.2 596.3 L796.6 588.3 L799.8 583.5 L805.3 579.5 L802.2 574.7 L795.8 570.8 L787.0 568.4Z" fill="#b8ab2d" stroke="#fff" stroke-width="2.2" stroke-linejoin="round"/><path d="M786.2 565.2 L791.0 560.4 L802.2 557.2 L814.9 555.6 L826.1 557.2 L832.5 562.0 L840.5 566.8 L848.4 572.3 L853.2 574.7 L861.2 572.3 L872.4 570.8 L883.6 571.5 L889.9 577.1 L888.3 584.3 L882.0 589.1 L875.6 593.1 L871.6 597.9 L875.6 604.3 L880.4 611.5 L875.6 614.6 L871.6 617.0 L866.0 613.0 L867.6 620.2 L869.2 628.2 L877.2 632.2 L888.3 637.0 L899.5 643.4 L895.5 649.8 L890.7 656.9 L888.3 661.7 L899.5 667.3 L910.7 672.1 L923.5 676.1 L936.2 678.5 L949.0 680.1 L960.0 684.9 L961.8 686.2 L973.0 688.6 L985.8 689.4 L995.3 691.0 L1004.9 689.4 L1007.3 685.4 L1003.6 679.8 L1004.1 673.4 L1008.1 669.4 L1012.9 668.6 L1014.5 673.4 L1012.9 678.2 L1016.1 683.0 L1022.5 683.8 L1025.7 686.2 L1036.8 683.0 L1049.6 683.0 L1064.0 681.4 L1063.2 678.2 L1056.0 675.0 L1056.8 671.8 L1065.6 669.4 L1072.0 667.0 L1078.3 659.1 L1086.3 654.3 L1094.3 648.7 L1103.9 648.7 L1111.9 646.3 L1115.9 644.7 L1119.8 647.9 L1123.0 651.1 L1123.0 655.9 L1129.4 655.9 L1136.6 656.7 L1137.4 661.5 L1132.6 664.6 L1134.2 670.2 L1124.6 671.8 L1116.7 675.8 L1108.7 681.4 L1107.9 689.4 L1104.7 695.8 L1103.9 703.8 L1099.1 714.9 L1087.9 714.9 L1086.3 721.3 L1087.9 727.7 L1085.5 732.5 L1085.5 740.5 L1081.5 742.9 L1077.5 740.5 L1075.2 732.5 L1071.2 726.1 L1072.0 720.5 L1065.6 722.9 L1062.4 729.3 L1059.2 730.9 L1055.2 723.7 L1055.2 718.9 L1060.8 714.9 L1065.6 713.3 L1072.0 705.3 L1065.6 703.8 L1049.6 703.4 L1032.1 702.2 L1030.5 694.2 L1025.7 695.0 L1020.9 694.2 L1016.1 691.8 L1011.3 691.0 L1007.3 694.2 L1011.3 699.0 L1017.7 702.2 L1016.1 706.1 L1009.7 708.5 L1006.5 710.1 L1011.3 714.9 L1016.1 719.7 L1015.3 726.1 L1017.7 732.5 L1020.9 738.9 L1014.8 743.1 L1010.0 742.3 L1006.8 747.1 L997.3 751.1 L992.5 755.9 L993.3 763.0 L987.7 768.6 L978.1 772.6 L970.1 774.2 L963.8 778.2 L955.8 787.8 L945.9 798.0 L934.7 804.4 L922.0 810.8 L921.2 816.3 L914.0 819.5 L906.0 820.3 L898.0 825.9 L891.6 825.9 L886.8 832.3 L887.6 841.1 L886.8 850.7 L889.2 860.2 L886.8 868.2 L881.3 876.2 L882.1 885.8 L882.1 895.3 L875.7 896.1 L870.9 901.7 L866.9 908.1 L858.1 911.3 L853.3 916.1 L850.1 920.9 L842.2 924.9 L834.2 921.7 L827.8 916.1 L823.0 908.1 L821.4 900.1 L816.6 890.6 L811.8 881.0 L805.4 873.0 L799.1 861.8 L794.3 850.7 L787.9 837.9 L781.5 826.7 L777.5 815.5 L777.4 808.1 L776.6 798.5 L774.2 789.0 L774.2 779.4 L771.8 773.0 L775.0 766.6 L777.4 758.6 L775.0 752.3 L778.2 745.9 L779.8 740.8 L771.8 741.1 L768.6 744.3 L768.6 751.5 L765.4 754.6 L757.5 757.8 L747.9 760.2 L739.9 757.8 L731.9 751.5 L723.9 744.3 L719.2 737.9 L730.3 736.3 L739.9 733.9 L743.1 728.3 L738.3 730.7 L730.3 732.3 L720.8 730.7 L712.8 725.9 L707.2 721.1 L709.6 717.9 L717.6 713.9 L728.7 713.9 L739.9 713.9 L749.5 713.9 L753.5 710.0 L751.1 706.0 L747.9 700.4 L743.1 696.4 L739.1 691.6 L739.1 693.7 L739.9 687.3 L732.7 683.3 L731.9 679.3 L736.7 673.7 L745.5 668.1 L747.9 669.7 L759.1 670.5 L768.6 668.1 L776.6 660.1 L787.0 653.8 L791.8 645.8 L799.0 641.8 L803.8 634.6 L810.1 629.8 L810.1 623.4 L813.3 618.6 L820.5 616.2 L819.7 613.0 L808.5 607.5 L798.2 603.5 L798.2 596.3 L796.6 588.3 L799.8 583.5 L805.3 579.5 L802.2 574.7 L795.8 570.8 L787.0 568.4Z" fill="#b8ab2d"/></g>
<g clip-path="url(#rusclip)"><path d="M1221.5 740.0 L1223.8 730.5 L1226.2 720.9 L1223.8 711.3 L1227.0 701.7 L1231.8 693.8 L1238.2 689.0 L1242.2 693.8 L1244.6 684.2 L1251.0 683.4 L1259.0 684.2 L1261.4 674.6 L1265.3 666.6 L1270.1 660.2 L1273.3 652.3 L1277.3 645.9 L1278.9 641.9 L1287.7 642.7 L1288.5 650.7 L1290.1 660.2 L1290.1 673.0 L1290.1 685.8 L1290.9 695.3 L1295.7 696.9 L1295.7 689.0 L1298.9 679.4 L1301.3 685.8 L1302.1 693.8 L1306.8 696.1 L1313.2 698.5 L1317.2 703.3 L1322.8 704.9 L1324.4 709.7 L1327.6 704.9 L1327.6 695.3 L1323.6 689.0 L1320.4 681.0 L1320.4 673.0 L1324.4 666.6 L1329.2 660.2 L1335.6 653.8 L1342.0 649.1 L1349.9 647.5 L1356.3 648.3 L1354.7 653.8 L1346.8 655.4 L1340.4 660.2 L1334.0 665.8 L1328.4 671.4 L1326.0 679.4 L1326.8 687.4 L1329.2 695.3 L1331.6 703.3 L1335.6 711.3 L1339.6 717.7 L1340.4 724.1 L1342.0 717.7 L1342.0 706.5 L1345.2 698.5 L1349.9 689.0 L1353.9 685.8 L1355.1 692.2 L1353.1 700.1 L1351.5 705.9 L1349.9 721.8 L1348.3 731.4 L1342.0 739.4 L1346.8 742.6 L1351.5 734.6 L1353.9 726.6 L1355.5 737.8 L1357.9 741.8 L1358.7 731.4 L1356.3 721.8 L1353.9 713.9 L1355.5 702.7 L1357.9 696.9 L1361.9 697.3 L1365.9 692.2 L1369.1 689.0 L1375.5 685.8 L1380.3 684.2 L1381.1 674.6 L1386.7 671.4 L1391.4 666.6 L1397.8 661.8 L1401.5 655.1 L1402.3 650.3 L1405.5 655.1 L1411.9 656.7 L1417.5 663.1 L1416.7 671.1 L1414.3 679.1 L1410.3 690.3 L1419.9 683.9 L1427.9 680.7 L1434.3 679.1 L1437.5 672.7 L1443.8 672.7 L1447.0 680.7 L1451.8 687.1 L1455.0 680.7 L1459.8 675.9 L1463.0 671.1 L1463.0 663.1 L1463.8 655.1 L1469.4 651.9 L1475.8 645.6 L1483.8 647.2 L1486.9 639.2 L1491.7 632.0 L1496.5 631.2 L1501.3 634.4 L1502.9 624.8 L1506.1 616.8 L1506.1 607.3 L1512.5 608.8 L1507.7 600.9 L1510.9 592.9 L1515.7 584.9 L1520.5 578.5 L1526.8 572.1 L1533.2 567.3 L1537.2 557.8 L1540.4 553.0 L1543.6 559.4 L1544.4 565.8 L1548.4 568.1 L1546.8 576.9 L1539.6 583.3 L1537.2 588.1 L1539.6 594.5 L1539.6 604.1 L1544.4 602.5 L1552.4 602.5 L1551.6 608.8 L1548.4 615.2 L1550.8 624.8 L1551.6 634.4 L1552.4 644.0 L1554.0 650.3 L1549.2 656.7 L1547.6 666.3 L1546.0 675.9 L1548.4 685.5 L1553.2 691.8 L1554.0 689.8 L1560.4 693.0 L1562.0 701.0 L1566.8 708.9 L1566.0 716.9 L1569.1 724.9 L1571.2 737.7 L1571.2 752.0 L1565.2 745.7 L1558.8 739.3 L1552.4 731.3 L1547.6 721.7 L1545.2 710.5 L1544.4 697.8 L1542.8 685.0 L1539.6 671.1 L1537.2 663.1 L1535.6 657.5 L1533.2 666.3 L1531.6 677.5 L1529.2 685.5 L1530.8 691.4 L1530.0 701.0 L1532.4 708.9 L1533.2 715.3 L1528.4 721.7 L1523.7 728.1 L1520.5 736.1 L1514.1 742.5 L1510.9 750.4 L1510.1 761.6 L1509.6 774.4 L1509.0 787.2 L1506.9 799.9 L1510.9 803.9 L1515.7 806.3 L1518.9 798.3 L1523.7 795.1 L1527.6 787.2 L1533.2 793.5 L1538.0 801.5 L1544.4 809.5 L1546.8 814.3 L1546.0 818.7 L1541.2 854.6 L1540.4 866.6 L1539.6 879.4 L1538.8 892.2 L1537.2 901.7 L1530.0 906.5 L1528.4 901.7 L1523.7 895.3 L1524.5 887.4 L1527.6 884.2 L1526.8 869.8 L1526.0 858.6 L1524.5 855.4 L1522.1 858.6 L1518.9 866.6 L1514.9 873.0 L1512.5 869.8 L1506.1 864.2 L1498.9 866.6 L1494.9 860.2 L1491.7 854.6 L1490.1 850.7 L1472.6 850.7 L1471.8 854.6 L1472.6 865.0 L1472.6 876.2 L1471.8 884.2 L1467.8 889.0 L1459.8 888.2 L1455.0 892.2 L1450.2 900.1 L1443.8 904.9 L1437.5 904.9 L1432.7 900.1 L1426.3 899.3 L1419.9 901.7 L1415.9 895.3 L1410.3 890.6 L1404.7 888.2 L1401.5 895.3 L1402.3 901.7 L1400.8 908.9 L1392.8 908.1 L1388.0 903.3 L1380.0 900.9 L1375.5 906.5 L1369.1 912.9 L1365.9 914.5 L1361.1 908.1 L1355.5 898.5 L1351.5 893.8 L1343.6 890.6 L1341.2 881.0 L1338.8 869.8 L1335.6 858.6 L1335.6 856.2 L1327.6 860.2 L1321.2 852.3 L1321.2 841.1 L1316.4 836.3 L1306.8 837.9 L1297.3 835.5 L1291.7 831.5 L1289.3 837.9 L1285.3 844.3 L1284.5 857.0 L1281.3 858.6 L1274.9 849.1 L1268.5 844.3 L1263.8 839.5 L1260.6 826.7 L1255.8 819.5 L1249.4 820.3 L1245.4 824.3 L1243.8 815.5 L1238.2 825.1 L1236.6 834.7 L1237.4 842.7 L1235.0 853.8 L1228.6 852.3 L1223.0 855.4 L1220.7 868.2 L1218.3 884.2 L1215.1 885.8 L1211.1 871.4 L1206.3 857.0 L1201.5 842.7 L1199.1 833.1 L1197.5 813.9 L1198.3 808.9 L1199.9 811.3 L1206.3 808.1 L1210.3 803.3 L1214.3 801.7 L1219.9 798.5 L1221.5 792.2 L1219.1 782.6 L1215.9 773.0 L1217.5 763.4 L1219.1 753.8 L1215.1 749.1 L1216.7 741.1Z M1203.9 680.2 L1207.9 684.2 L1209.5 690.6 L1207.9 696.9 L1205.5 692.2 L1203.1 685.8Z M1391.2 615.2 L1393.6 621.6 L1396.0 628.0 L1396.8 637.6 L1400.0 633.6 L1403.1 640.8 L1402.3 647.2 L1396.8 649.5 L1391.2 640.8 L1387.2 631.2 L1388.8 623.2Z M1464.6 623.2 L1463.0 629.6 L1458.2 634.4 L1455.0 640.8 L1450.2 648.8 L1447.8 642.4 L1448.6 636.0 L1453.4 630.4 L1459.0 628.0Z M1459.0 648.0 L1463.0 647.2 L1462.2 653.5 L1459.0 655.9Z M1508.5 566.5 L1509.6 568.9 L1508.5 576.9 L1506.9 579.3 L1506.9 572.1Z M1172.8 806.8 L1180.0 800.4 L1185.5 805.2 L1187.1 812.3 L1195.1 811.5 L1194.3 816.3 L1188.7 817.9 L1183.9 821.1 L1179.2 824.3 L1176.0 815.5Z M1345.2 597.2 L1349.1 596.4 L1348.3 601.2 L1345.2 602.8Z M1353.9 598.0 L1357.1 597.2 L1358.7 604.4 L1362.7 605.2 L1361.9 610.8 L1357.1 611.5 L1353.9 605.2Z" fill="#1c2430" transform="translate(-2,3.5)"/><path d="M1221.5 740.0 L1223.8 730.5 L1226.2 720.9 L1223.8 711.3 L1227.0 701.7 L1231.8 693.8 L1238.2 689.0 L1242.2 693.8 L1244.6 684.2 L1251.0 683.4 L1259.0 684.2 L1261.4 674.6 L1265.3 666.6 L1270.1 660.2 L1273.3 652.3 L1277.3 645.9 L1278.9 641.9 L1287.7 642.7 L1288.5 650.7 L1290.1 660.2 L1290.1 673.0 L1290.1 685.8 L1290.9 695.3 L1295.7 696.9 L1295.7 689.0 L1298.9 679.4 L1301.3 685.8 L1302.1 693.8 L1306.8 696.1 L1313.2 698.5 L1317.2 703.3 L1322.8 704.9 L1324.4 709.7 L1327.6 704.9 L1327.6 695.3 L1323.6 689.0 L1320.4 681.0 L1320.4 673.0 L1324.4 666.6 L1329.2 660.2 L1335.6 653.8 L1342.0 649.1 L1349.9 647.5 L1356.3 648.3 L1354.7 653.8 L1346.8 655.4 L1340.4 660.2 L1334.0 665.8 L1328.4 671.4 L1326.0 679.4 L1326.8 687.4 L1329.2 695.3 L1331.6 703.3 L1335.6 711.3 L1339.6 717.7 L1340.4 724.1 L1342.0 717.7 L1342.0 706.5 L1345.2 698.5 L1349.9 689.0 L1353.9 685.8 L1355.1 692.2 L1353.1 700.1 L1351.5 705.9 L1349.9 721.8 L1348.3 731.4 L1342.0 739.4 L1346.8 742.6 L1351.5 734.6 L1353.9 726.6 L1355.5 737.8 L1357.9 741.8 L1358.7 731.4 L1356.3 721.8 L1353.9 713.9 L1355.5 702.7 L1357.9 696.9 L1361.9 697.3 L1365.9 692.2 L1369.1 689.0 L1375.5 685.8 L1380.3 684.2 L1381.1 674.6 L1386.7 671.4 L1391.4 666.6 L1397.8 661.8 L1401.5 655.1 L1402.3 650.3 L1405.5 655.1 L1411.9 656.7 L1417.5 663.1 L1416.7 671.1 L1414.3 679.1 L1410.3 690.3 L1419.9 683.9 L1427.9 680.7 L1434.3 679.1 L1437.5 672.7 L1443.8 672.7 L1447.0 680.7 L1451.8 687.1 L1455.0 680.7 L1459.8 675.9 L1463.0 671.1 L1463.0 663.1 L1463.8 655.1 L1469.4 651.9 L1475.8 645.6 L1483.8 647.2 L1486.9 639.2 L1491.7 632.0 L1496.5 631.2 L1501.3 634.4 L1502.9 624.8 L1506.1 616.8 L1506.1 607.3 L1512.5 608.8 L1507.7 600.9 L1510.9 592.9 L1515.7 584.9 L1520.5 578.5 L1526.8 572.1 L1533.2 567.3 L1537.2 557.8 L1540.4 553.0 L1543.6 559.4 L1544.4 565.8 L1548.4 568.1 L1546.8 576.9 L1539.6 583.3 L1537.2 588.1 L1539.6 594.5 L1539.6 604.1 L1544.4 602.5 L1552.4 602.5 L1551.6 608.8 L1548.4 615.2 L1550.8 624.8 L1551.6 634.4 L1552.4 644.0 L1554.0 650.3 L1549.2 656.7 L1547.6 666.3 L1546.0 675.9 L1548.4 685.5 L1553.2 691.8 L1554.0 689.8 L1560.4 693.0 L1562.0 701.0 L1566.8 708.9 L1566.0 716.9 L1569.1 724.9 L1571.2 737.7 L1571.2 752.0 L1565.2 745.7 L1558.8 739.3 L1552.4 731.3 L1547.6 721.7 L1545.2 710.5 L1544.4 697.8 L1542.8 685.0 L1539.6 671.1 L1537.2 663.1 L1535.6 657.5 L1533.2 666.3 L1531.6 677.5 L1529.2 685.5 L1530.8 691.4 L1530.0 701.0 L1532.4 708.9 L1533.2 715.3 L1528.4 721.7 L1523.7 728.1 L1520.5 736.1 L1514.1 742.5 L1510.9 750.4 L1510.1 761.6 L1509.6 774.4 L1509.0 787.2 L1506.9 799.9 L1510.9 803.9 L1515.7 806.3 L1518.9 798.3 L1523.7 795.1 L1527.6 787.2 L1533.2 793.5 L1538.0 801.5 L1544.4 809.5 L1546.8 814.3 L1546.0 818.7 L1541.2 854.6 L1540.4 866.6 L1539.6 879.4 L1538.8 892.2 L1537.2 901.7 L1530.0 906.5 L1528.4 901.7 L1523.7 895.3 L1524.5 887.4 L1527.6 884.2 L1526.8 869.8 L1526.0 858.6 L1524.5 855.4 L1522.1 858.6 L1518.9 866.6 L1514.9 873.0 L1512.5 869.8 L1506.1 864.2 L1498.9 866.6 L1494.9 860.2 L1491.7 854.6 L1490.1 850.7 L1472.6 850.7 L1471.8 854.6 L1472.6 865.0 L1472.6 876.2 L1471.8 884.2 L1467.8 889.0 L1459.8 888.2 L1455.0 892.2 L1450.2 900.1 L1443.8 904.9 L1437.5 904.9 L1432.7 900.1 L1426.3 899.3 L1419.9 901.7 L1415.9 895.3 L1410.3 890.6 L1404.7 888.2 L1401.5 895.3 L1402.3 901.7 L1400.8 908.9 L1392.8 908.1 L1388.0 903.3 L1380.0 900.9 L1375.5 906.5 L1369.1 912.9 L1365.9 914.5 L1361.1 908.1 L1355.5 898.5 L1351.5 893.8 L1343.6 890.6 L1341.2 881.0 L1338.8 869.8 L1335.6 858.6 L1335.6 856.2 L1327.6 860.2 L1321.2 852.3 L1321.2 841.1 L1316.4 836.3 L1306.8 837.9 L1297.3 835.5 L1291.7 831.5 L1289.3 837.9 L1285.3 844.3 L1284.5 857.0 L1281.3 858.6 L1274.9 849.1 L1268.5 844.3 L1263.8 839.5 L1260.6 826.7 L1255.8 819.5 L1249.4 820.3 L1245.4 824.3 L1243.8 815.5 L1238.2 825.1 L1236.6 834.7 L1237.4 842.7 L1235.0 853.8 L1228.6 852.3 L1223.0 855.4 L1220.7 868.2 L1218.3 884.2 L1215.1 885.8 L1211.1 871.4 L1206.3 857.0 L1201.5 842.7 L1199.1 833.1 L1197.5 813.9 L1198.3 808.9 L1199.9 811.3 L1206.3 808.1 L1210.3 803.3 L1214.3 801.7 L1219.9 798.5 L1221.5 792.2 L1219.1 782.6 L1215.9 773.0 L1217.5 763.4 L1219.1 753.8 L1215.1 749.1 L1216.7 741.1Z M1203.9 680.2 L1207.9 684.2 L1209.5 690.6 L1207.9 696.9 L1205.5 692.2 L1203.1 685.8Z M1391.2 615.2 L1393.6 621.6 L1396.0 628.0 L1396.8 637.6 L1400.0 633.6 L1403.1 640.8 L1402.3 647.2 L1396.8 649.5 L1391.2 640.8 L1387.2 631.2 L1388.8 623.2Z M1464.6 623.2 L1463.0 629.6 L1458.2 634.4 L1455.0 640.8 L1450.2 648.8 L1447.8 642.4 L1448.6 636.0 L1453.4 630.4 L1459.0 628.0Z M1459.0 648.0 L1463.0 647.2 L1462.2 653.5 L1459.0 655.9Z M1508.5 566.5 L1509.6 568.9 L1508.5 576.9 L1506.9 579.3 L1506.9 572.1Z M1172.8 806.8 L1180.0 800.4 L1185.5 805.2 L1187.1 812.3 L1195.1 811.5 L1194.3 816.3 L1188.7 817.9 L1183.9 821.1 L1179.2 824.3 L1176.0 815.5Z M1345.2 597.2 L1349.1 596.4 L1348.3 601.2 L1345.2 602.8Z M1353.9 598.0 L1357.1 597.2 L1358.7 604.4 L1362.7 605.2 L1361.9 610.8 L1357.1 611.5 L1353.9 605.2Z" fill="#3d85c8" stroke="#fff" stroke-width="2.2" stroke-linejoin="round"/><path d="M1221.5 740.0 L1223.8 730.5 L1226.2 720.9 L1223.8 711.3 L1227.0 701.7 L1231.8 693.8 L1238.2 689.0 L1242.2 693.8 L1244.6 684.2 L1251.0 683.4 L1259.0 684.2 L1261.4 674.6 L1265.3 666.6 L1270.1 660.2 L1273.3 652.3 L1277.3 645.9 L1278.9 641.9 L1287.7 642.7 L1288.5 650.7 L1290.1 660.2 L1290.1 673.0 L1290.1 685.8 L1290.9 695.3 L1295.7 696.9 L1295.7 689.0 L1298.9 679.4 L1301.3 685.8 L1302.1 693.8 L1306.8 696.1 L1313.2 698.5 L1317.2 703.3 L1322.8 704.9 L1324.4 709.7 L1327.6 704.9 L1327.6 695.3 L1323.6 689.0 L1320.4 681.0 L1320.4 673.0 L1324.4 666.6 L1329.2 660.2 L1335.6 653.8 L1342.0 649.1 L1349.9 647.5 L1356.3 648.3 L1354.7 653.8 L1346.8 655.4 L1340.4 660.2 L1334.0 665.8 L1328.4 671.4 L1326.0 679.4 L1326.8 687.4 L1329.2 695.3 L1331.6 703.3 L1335.6 711.3 L1339.6 717.7 L1340.4 724.1 L1342.0 717.7 L1342.0 706.5 L1345.2 698.5 L1349.9 689.0 L1353.9 685.8 L1355.1 692.2 L1353.1 700.1 L1351.5 705.9 L1349.9 721.8 L1348.3 731.4 L1342.0 739.4 L1346.8 742.6 L1351.5 734.6 L1353.9 726.6 L1355.5 737.8 L1357.9 741.8 L1358.7 731.4 L1356.3 721.8 L1353.9 713.9 L1355.5 702.7 L1357.9 696.9 L1361.9 697.3 L1365.9 692.2 L1369.1 689.0 L1375.5 685.8 L1380.3 684.2 L1381.1 674.6 L1386.7 671.4 L1391.4 666.6 L1397.8 661.8 L1401.5 655.1 L1402.3 650.3 L1405.5 655.1 L1411.9 656.7 L1417.5 663.1 L1416.7 671.1 L1414.3 679.1 L1410.3 690.3 L1419.9 683.9 L1427.9 680.7 L1434.3 679.1 L1437.5 672.7 L1443.8 672.7 L1447.0 680.7 L1451.8 687.1 L1455.0 680.7 L1459.8 675.9 L1463.0 671.1 L1463.0 663.1 L1463.8 655.1 L1469.4 651.9 L1475.8 645.6 L1483.8 647.2 L1486.9 639.2 L1491.7 632.0 L1496.5 631.2 L1501.3 634.4 L1502.9 624.8 L1506.1 616.8 L1506.1 607.3 L1512.5 608.8 L1507.7 600.9 L1510.9 592.9 L1515.7 584.9 L1520.5 578.5 L1526.8 572.1 L1533.2 567.3 L1537.2 557.8 L1540.4 553.0 L1543.6 559.4 L1544.4 565.8 L1548.4 568.1 L1546.8 576.9 L1539.6 583.3 L1537.2 588.1 L1539.6 594.5 L1539.6 604.1 L1544.4 602.5 L1552.4 602.5 L1551.6 608.8 L1548.4 615.2 L1550.8 624.8 L1551.6 634.4 L1552.4 644.0 L1554.0 650.3 L1549.2 656.7 L1547.6 666.3 L1546.0 675.9 L1548.4 685.5 L1553.2 691.8 L1554.0 689.8 L1560.4 693.0 L1562.0 701.0 L1566.8 708.9 L1566.0 716.9 L1569.1 724.9 L1571.2 737.7 L1571.2 752.0 L1565.2 745.7 L1558.8 739.3 L1552.4 731.3 L1547.6 721.7 L1545.2 710.5 L1544.4 697.8 L1542.8 685.0 L1539.6 671.1 L1537.2 663.1 L1535.6 657.5 L1533.2 666.3 L1531.6 677.5 L1529.2 685.5 L1530.8 691.4 L1530.0 701.0 L1532.4 708.9 L1533.2 715.3 L1528.4 721.7 L1523.7 728.1 L1520.5 736.1 L1514.1 742.5 L1510.9 750.4 L1510.1 761.6 L1509.6 774.4 L1509.0 787.2 L1506.9 799.9 L1510.9 803.9 L1515.7 806.3 L1518.9 798.3 L1523.7 795.1 L1527.6 787.2 L1533.2 793.5 L1538.0 801.5 L1544.4 809.5 L1546.8 814.3 L1546.0 818.7 L1541.2 854.6 L1540.4 866.6 L1539.6 879.4 L1538.8 892.2 L1537.2 901.7 L1530.0 906.5 L1528.4 901.7 L1523.7 895.3 L1524.5 887.4 L1527.6 884.2 L1526.8 869.8 L1526.0 858.6 L1524.5 855.4 L1522.1 858.6 L1518.9 866.6 L1514.9 873.0 L1512.5 869.8 L1506.1 864.2 L1498.9 866.6 L1494.9 860.2 L1491.7 854.6 L1490.1 850.7 L1472.6 850.7 L1471.8 854.6 L1472.6 865.0 L1472.6 876.2 L1471.8 884.2 L1467.8 889.0 L1459.8 888.2 L1455.0 892.2 L1450.2 900.1 L1443.8 904.9 L1437.5 904.9 L1432.7 900.1 L1426.3 899.3 L1419.9 901.7 L1415.9 895.3 L1410.3 890.6 L1404.7 888.2 L1401.5 895.3 L1402.3 901.7 L1400.8 908.9 L1392.8 908.1 L1388.0 903.3 L1380.0 900.9 L1375.5 906.5 L1369.1 912.9 L1365.9 914.5 L1361.1 908.1 L1355.5 898.5 L1351.5 893.8 L1343.6 890.6 L1341.2 881.0 L1338.8 869.8 L1335.6 858.6 L1335.6 856.2 L1327.6 860.2 L1321.2 852.3 L1321.2 841.1 L1316.4 836.3 L1306.8 837.9 L1297.3 835.5 L1291.7 831.5 L1289.3 837.9 L1285.3 844.3 L1284.5 857.0 L1281.3 858.6 L1274.9 849.1 L1268.5 844.3 L1263.8 839.5 L1260.6 826.7 L1255.8 819.5 L1249.4 820.3 L1245.4 824.3 L1243.8 815.5 L1238.2 825.1 L1236.6 834.7 L1237.4 842.7 L1235.0 853.8 L1228.6 852.3 L1223.0 855.4 L1220.7 868.2 L1218.3 884.2 L1215.1 885.8 L1211.1 871.4 L1206.3 857.0 L1201.5 842.7 L1199.1 833.1 L1197.5 813.9 L1198.3 808.9 L1199.9 811.3 L1206.3 808.1 L1210.3 803.3 L1214.3 801.7 L1219.9 798.5 L1221.5 792.2 L1219.1 782.6 L1215.9 773.0 L1217.5 763.4 L1219.1 753.8 L1215.1 749.1 L1216.7 741.1Z M1203.9 680.2 L1207.9 684.2 L1209.5 690.6 L1207.9 696.9 L1205.5 692.2 L1203.1 685.8Z M1391.2 615.2 L1393.6 621.6 L1396.0 628.0 L1396.8 637.6 L1400.0 633.6 L1403.1 640.8 L1402.3 647.2 L1396.8 649.5 L1391.2 640.8 L1387.2 631.2 L1388.8 623.2Z M1464.6 623.2 L1463.0 629.6 L1458.2 634.4 L1455.0 640.8 L1450.2 648.8 L1447.8 642.4 L1448.6 636.0 L1453.4 630.4 L1459.0 628.0Z M1459.0 648.0 L1463.0 647.2 L1462.2 653.5 L1459.0 655.9Z M1508.5 566.5 L1509.6 568.9 L1508.5 576.9 L1506.9 579.3 L1506.9 572.1Z M1172.8 806.8 L1180.0 800.4 L1185.5 805.2 L1187.1 812.3 L1195.1 811.5 L1194.3 816.3 L1188.7 817.9 L1183.9 821.1 L1179.2 824.3 L1176.0 815.5Z M1345.2 597.2 L1349.1 596.4 L1348.3 601.2 L1345.2 602.8Z M1353.9 598.0 L1357.1 597.2 L1358.7 604.4 L1362.7 605.2 L1361.9 610.8 L1357.1 611.5 L1353.9 605.2Z" fill="#3d85c8"/><path d="M1275.7 660.2 L1278.1 669.8 L1279.7 679.4 L1286.1 685.8 L1281.3 688.2 L1278.9 695.3 L1275.7 685.8 L1273.3 693.8 L1270.1 689.0 L1271.7 679.4 L1274.9 673.0Z M1357.9 701.2 L1361.4 705.2 L1361.9 709.2 L1359.2 706.8Z M1365.9 690.0 L1370.7 701.2 L1371.5 710.8 L1369.9 720.3 L1368.3 710.8 L1367.5 699.6Z M1242.2 687.4 L1243.8 692.2 L1242.2 694.5 L1241.1 690.6Z" fill="#1c2430" transform="translate(1.2,-1.8)"/><path d="M1275.7 660.2 L1278.1 669.8 L1279.7 679.4 L1286.1 685.8 L1281.3 688.2 L1278.9 695.3 L1275.7 685.8 L1273.3 693.8 L1270.1 689.0 L1271.7 679.4 L1274.9 673.0Z M1357.9 701.2 L1361.4 705.2 L1361.9 709.2 L1359.2 706.8Z M1365.9 690.0 L1370.7 701.2 L1371.5 710.8 L1369.9 720.3 L1368.3 710.8 L1367.5 699.6Z M1242.2 687.4 L1243.8 692.2 L1242.2 694.5 L1241.1 690.6Z" fill="#fff"/><path d="M1527.6 796.4 L1533.2 804.4 L1539.6 813.9 L1541.2 818.7 M1524.5 855.4 L1526.0 858.6 L1526.8 869.8 L1527.6 884.2 L1524.5 887.4 L1523.7 895.3 L1528.4 901.7" fill="none" stroke="#1c2430" stroke-width="1.2" stroke-dasharray="3 1.5"/></g><clipPath id="rusclip"><rect x="1165" y="546" width="406.5" height="376"/></clipPath>
<g font-family="'Liberation Sans',sans-serif" font-size="23.2" fill="#169cff" stroke="#169cff" stroke-width="0.35" opacity="0.93"><text y="586.3"><tspan x="879.7" textLength="47.5" lengthAdjust="spacingAndGlyphs">Type</tspan> <tspan x="935.8" textLength="78.2" lengthAdjust="spacingAndGlyphs">success</tspan></text><text y="586.3"><tspan x="886" textLength="47.5" lengthAdjust="spacingAndGlyphs">Type</tspan> <tspan x="942.2" textLength="68" lengthAdjust="spacingAndGlyphs">failure</tspan></text></g>
<rect x="949.8" y="592.2" width="4.4" height="1.4" fill="#169cff"/>
<rect x="1426" y="818" width="183" height="36.2" fill="#676767"/>
<path d="M1426.5 854 V818.5 H1609" fill="none" stroke="#a9b4c4" stroke-width="1"/>
<path d="M1426.5 853.7 H1609" fill="none" stroke="#9a9a9a" stroke-width="0.8"/>
<text x="1481.4" y="842.6" font-family="'Liberation Sans',sans-serif" font-size="23.5" fill="#fff" textLength="74" lengthAdjust="spacingAndGlyphs">Submit</text>
<rect x="325.9" y="263.9" width="322.1" height="210.8" fill="none" stroke="#b9eca1" stroke-width="5"/>
<rect x="766.0" y="261.0" width="328.9" height="216.6" fill="none" stroke="#b9eca1" stroke-width="5"/>
<rect x="1226.0" y="261.0" width="325.1" height="211.5" fill="none" stroke="#b9eca1" stroke-width="5"/>
<g opacity="0.93"><rect x="275.0" y="550.8" width="326.8" height="368.9" fill="none" stroke="#a3cfff" stroke-width="5"/><rect x="701.8" y="550.8" width="438.9" height="379.0" fill="none" stroke="#a3cfff" stroke-width="5"/></g>
<g><rect x="1167.0" y="547.9" width="406.9" height="372.0" fill="none" stroke="#a3cfff" stroke-width="5"/></g>
<rect x="1571.4" y="818" width="5" height="36.2" fill="#4b79ac"/>
<g fill="none" stroke="#e01a1a" stroke-width="1.2"><path d="M659.5 262.6 H655.6 V273.0 H659.5"/><path d="M663.5 262.6 H667.4 V273.0 H663.5"/><path d="M658.7 267.8 H664.3"/></g>
<g fill="none" stroke="#e01a1a" stroke-width="1.2"><path d="M1106.5 258.8 H1102.6 V269.2 H1106.5"/><path d="M1110.5 258.8 H1114.4 V269.2 H1110.5"/><path d="M1105.7 264.0 H1111.3"/></g>
<g fill="none" stroke="#e01a1a" stroke-width="1.2"><path d="M1562.6 258.70000000000005 H1558.6999999999998 V269.1 H1562.6"/><path d="M1566.6 258.70000000000005 H1570.5 V269.1 H1566.6"/><path d="M1561.8 263.90000000000003 H1567.3999999999999"/></g>
<g fill="none" stroke="#e01a1a" stroke-width="1.2"><path d="M613.6 549.1 H609.7 V559.5 H613.6"/><path d="M617.6 549.1 H621.5 V559.5 H617.6"/><path d="M612.8000000000001 554.3 H618.4"/></g>
<g fill="none" stroke="#e01a1a" stroke-width="1.2"><path d="M1152.3 549.2 H1148.3999999999999 V559.6 H1152.3"/><path d="M1156.3 549.2 H1160.2 V559.6 H1156.3"/><path d="M1151.5 554.4 H1157.1"/></g>
<g fill="none" stroke="#e01a1a" stroke-width="1.2"><path d="M1585.6 546.2 H1581.6999999999998 V556.6 H1585.6"/><path d="M1589.6 546.2 H1593.5 V556.6 H1589.6"/><path d="M1584.8 551.4 H1590.3999999999999"/></g>
<line x1="487.8" y1="370.0" x2="917.7" y2="737.3" stroke="#12a0ff" stroke-width="1.25"/><line x1="803.3" y1="639.5" x2="916.9" y2="738.2" stroke="#12a0ff" stroke-width="1.25"/><path d="M928.7 746.7 L914.6 740.9 L920.8 733.6 Z" fill="#00a2ff"/>
<line x1="930.5" y1="369.3" x2="1367.8" y2="730.5" stroke="#12a0ff" stroke-width="1.25"/><line x1="1271.1" y1="650.6" x2="1367.1" y2="731.4" stroke="#12a0ff" stroke-width="1.25"/><path d="M1379.0 739.7 L1364.8 734.2 L1370.9 726.8 Z" fill="#00a2ff"/>
<line x1="1389.5" y1="365.8" x2="445.0" y2="732.7" stroke="#12a0ff" stroke-width="1.25"/><line x1="538.7" y1="696.4" x2="444.6" y2="731.6" stroke="#12a0ff" stroke-width="1.25"/><path d="M431.5 738.0 L443.3 728.3 L446.8 737.2 Z" fill="#00a2ff"/>
<rect x="1229.5" y="264.5" width="319" height="205.5" fill="none" stroke="#c4e2ff" stroke-width="1.1"/>
<g stroke="#000" stroke-width="1.25" stroke-dasharray="3 1" fill="none"><path d="M1233 264.5 H1548"/><path d="M1233 470 H1548"/><path d="M1229.5 268 V470"/><path d="M1548.5 268 V470"/></g>
<rect x="1226.5" y="261.5" width="6" height="6" fill="#fff" fill-opacity="0.45" stroke="#000" stroke-width="1.1"/>
<rect x="1226.5" y="364.3" width="6" height="6" fill="#fff" fill-opacity="0.45" stroke="#000" stroke-width="1.1"/>
<rect x="1226.5" y="467.0" width="6" height="6" fill="#fff" fill-opacity="0.45" stroke="#000" stroke-width="1.1"/>
<rect x="1385.5" y="261.5" width="6" height="6" fill="#fff" fill-opacity="0.45" stroke="#000" stroke-width="1.1"/>
<rect x="1385.5" y="467.0" width="6" height="6" fill="#fff" fill-opacity="0.45" stroke="#000" stroke-width="1.1"/>
<rect x="1545.5" y="261.5" width="6" height="6" fill="#fff" fill-opacity="0.45" stroke="#000" stroke-width="1.1"/>
<rect x="1545.5" y="364.3" width="6" height="6" fill="#fff" fill-opacity="0.45" stroke="#000" stroke-width="1.1"/>
<rect x="1545.5" y="467.0" width="6" height="6" fill="#fff" fill-opacity="0.45" stroke="#000" stroke-width="1.1"/>
<g fill="none" stroke="#2a7fc9" stroke-width="1.5"><path d="M1384.8 246 A6.6 6.6 0 0 1 1396.2 247.6"/><path d="M1394.2 254.9 A6.6 6.6 0 0 1 1382.8 253"/></g>
<path d="M1393.6 249.2 L1399.2 247.2 L1397.6 252.2 Z" fill="#2a7fc9"/><path d="M1385.2 251.4 L1380 253 L1381.4 248.2 Z" fill="#2a7fc9"/>
<circle cx="1389.4" cy="250.4" r="3.1" fill="#e9a51c" stroke="#2a7fc9" stroke-width="1"/><circle cx="1389.4" cy="250.4" r="1.3" fill="#fff"/>
<g>
<rect x="1379.9" y="354.4" width="17.8" height="21.1" rx="2" fill="#fff" opacity="0.55"/>
<rect x="1381.8" y="360.5" width="5.0" height="5.0" fill="#dff0ff" stroke="#2a8fe8" stroke-width="1"/>
<path d="M1389.0 362.4 V370.8 H1393.3" fill="none" stroke="#222" stroke-width="1.5"/>
<path d="M1392.9 368.2 L1396.7 370.8 L1392.9 373.9Z" fill="#222"/>
</g>
</svg>
<!--/STAGE-->
<!--UITEXT-->
<svg class="abs" style="left:0;top:0" width="1643" height="198" viewBox="0 0 1643 198">
<text x="10.6" y="25.7" font-family="'DejaVu Sans Condensed','Liberation Sans',sans-serif" font-size="20.8" fill="#20a050" stroke="#20a050" stroke-width="0.9" textLength="22.5" lengthAdjust="spacingAndGlyphs">Cp</text>
<g font-family="'Liberation Sans',sans-serif" font-size="13" fill="#f2f2f2">
<text x="50.0" y="24" textLength="18.5" lengthAdjust="spacingAndGlyphs">File</text>
<text x="85.0" y="24" textLength="20.5" lengthAdjust="spacingAndGlyphs">Edit</text>
<text x="122.0" y="24" textLength="25.5" lengthAdjust="spacingAndGlyphs">View</text>
<text x="165.2" y="24" textLength="29.8" lengthAdjust="spacingAndGlyphs">Insert</text>
<text x="212.2" y="24" textLength="38.3" lengthAdjust="spacingAndGlyphs">Modify</text>
<text x="267.2" y="24" textLength="38.0" lengthAdjust="spacingAndGlyphs">Project</text>
<text x="321.2" y="24" textLength="25.0" lengthAdjust="spacingAndGlyphs">Quiz</text>
<text x="362.5" y="24" textLength="32.5" lengthAdjust="spacingAndGlyphs">Audio</text>
<text x="410.7" y="24" textLength="30.8" lengthAdjust="spacingAndGlyphs">Video</text>
<text x="458.7" y="24" textLength="41.0" lengthAdjust="spacingAndGlyphs">Themes</text>
<text x="517.7" y="24" textLength="44.8" lengthAdjust="spacingAndGlyphs">Window</text>
<text x="579.0" y="24" textLength="25.7" lengthAdjust="spacingAndGlyphs">Help</text>
<text x="715" y="26" font-size="11" textLength="12.5" lengthAdjust="spacingAndGlyphs">75</text>
</g>
<rect x="618.5" y="10.5" width="1" height="19" fill="#5c5f68"/>
<rect x="694.5" y="15.5" width="1.4" height="16" fill="#ffffff"/>
<g fill="none" stroke="#ffffff" stroke-width="1.5"><rect x="636.2" y="15.6" width="13.6" height="9.4" rx="1.2"/></g><g fill="#fff"><rect x="638.7" y="18.2" width="3.6" height="1.1"/><rect x="643.6" y="18.2" width="3.6" height="1.1"/><rect x="638.7" y="21.2" width="3.6" height="1.1"/><rect x="643.6" y="21.2" width="3.6" height="1.1"/><rect x="639" y="25.6" width="8" height="1.6"/></g>
<g><rect x="667.5" y="16.2" width="15.6" height="10.6" fill="#ffffff"/><path d="M667.5 16.6 L675.3 22.6 L683.1 16.6 M667.5 26.8 L673 21 M683.1 26.8 L677.6 21" fill="none" stroke="#23262f" stroke-width="1"/></g>
<path d="M776.5 21.5 L783.3 21.5 L779.9 25.8 Z" fill="#8a8d96"/>
<g font-family="'DejaVu Sans Condensed','Liberation Sans',sans-serif" fill="#2b2b3d">
<text x="14.5" y="54" font-size="13" textLength="200.5" lengthAdjust="spacingAndGlyphs">Drag and Drop (One-to-One).cptx*</text>
<text x="226.3" y="53.5" font-size="12">×</text>
</g>
<g font-family="'DejaVu Sans','Liberation Sans',sans-serif" font-weight="bold" font-size="12" fill="#000">
<text x="17" y="82" textLength="228" lengthAdjust="spacingAndGlyphs">Drag and Drop Interaction Wizard:</text>
<text x="309" y="82" textLength="29" lengthAdjust="spacingAndGlyphs">Step</text>
<text x="346.3" y="82" textLength="8" lengthAdjust="spacingAndGlyphs">3</text>
<text x="360.5" y="82" textLength="25.5" lengthAdjust="spacingAndGlyphs">of 3</text>
</g>
<g font-family="'DejaVu Sans Condensed','Liberation Sans',sans-serif" font-size="12.2" fill="#1e1e28">
<text x="17" y="110.5" textLength="438.8" lengthAdjust="spacingAndGlyphs">Specify correct answers by mapping drag sources to correct drop targets. To do</text>
<text x="17" y="124.5" textLength="326.5" lengthAdjust="spacingAndGlyphs">so, click and drag the handle at the center of drag sources.</text>
<g font-size="11.2"><text x="1055" y="126" textLength="24" lengthAdjust="spacingAndGlyphs">Back</text><text x="1156.8" y="126" textLength="30" lengthAdjust="spacingAndGlyphs">Finish</text><text x="1401" y="126" textLength="32.8" lengthAdjust="spacingAndGlyphs">Cancel</text></g>
</g>
<path d="M15 183.2 L15 189.8 L10.4 186.5 Z" fill="#6a6f94"/>
</svg>
<!--/UITEXT-->
</body></html>
